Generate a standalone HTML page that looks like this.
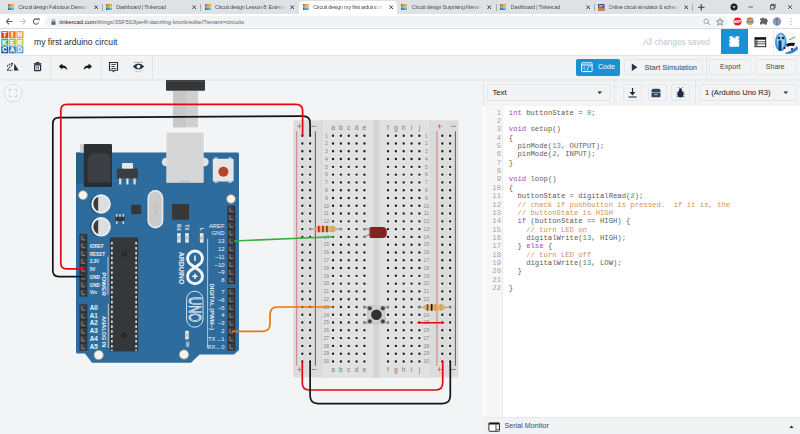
<!DOCTYPE html>
<html><head><meta charset="utf-8">
<style>
*{margin:0;padding:0;box-sizing:border-box}
html,body{width:800px;height:434px;overflow:hidden;background:#f3f4f6;font-family:"Liberation Sans",sans-serif;position:relative}
.a{position:absolute}
#tabs{left:0;top:0;width:800px;height:14px;background:#dee1e6}
.tab{position:absolute;top:0;height:14px;font-size:5.4px;letter-spacing:-0.22px;color:#4a4d51;line-height:14.5px;white-space:nowrap}
.tab .t{position:absolute;left:14.75px;top:0;width:71px;overflow:hidden;-webkit-mask-image:linear-gradient(90deg,#000 85%,transparent)}
.tab .x{position:absolute;top:0;font-size:8px;color:#3c4043}
.sep{position:absolute;top:3.5px;width:1px;height:7px;background:#a8abb0}
#chrome{left:0;top:14px;width:800px;height:15px;background:#fff;border-bottom:1px solid #dadce0}
#url{left:45px;top:2px;width:683px;height:11px;border-radius:6px;background:#f1f3f4;font-size:5.86px;line-height:11px;color:#202124}
#hdr{left:0;top:29px;width:800px;height:26px;background:#fff}
#tb{left:0;top:55px;width:800px;height:25px;background:#f2f3f5;border-bottom:1px solid #e6e8eb;box-shadow:0 1px 1.5px rgba(0,0,0,0.04);z-index:2;border-top:1px solid #e3e5e8}
#canvas{left:0;top:80px;width:483px;height:354px;background:#f3f4f6;overflow:hidden}
#panel{left:483px;top:80px;width:317px;height:354px;background:#f2f3f5;border-left:1px solid #e4e6e9}
.btn{position:absolute;border:1px solid #e6e7ea;border-radius:2px;background:#f2f3f5;font-size:7.5px;color:#1d2d3e}
#code{left:483px;top:105.5px;width:317px;height:311.5px;background:#fff}
#gut{left:484px;top:105.5px;width:19px;height:311.5px;background:#f7f7f7;border-right:1px solid #ececec}
.ln{position:absolute;left:483px;width:18px;text-align:right;font-family:"Liberation Mono",monospace;font-size:7.2px;color:#a3a3a3;height:8px;line-height:8px}
.cl{position:absolute;left:508.8px;font-family:"Liberation Mono",monospace;font-size:7.24px;color:#5c5c5c;white-space:pre;height:8px;line-height:8px}
.k{color:#a53fc4}.n{color:#3a9479}.c{color:#d0925a}
#serial{left:483px;top:417px;width:317px;height:17px;background:#f1f2f4;border-top:1px solid #e6e8eb;font-size:7.2px;color:#1d2d3e}
</style></head><body>
<div id="tabs" class="a"><div class="tab" style="left:3.5px;width:98px"><svg class="a" style="left:4.3px;top:3.8px" width="6.2" height="6.2"><rect x="0.00" y="0.00" width="1.77" height="1.77" fill="#e8422a"/><rect x="2.07" y="0.00" width="1.77" height="1.77" fill="#f07b3c"/><rect x="4.13" y="0.00" width="1.77" height="1.77" fill="#f59a3a"/><rect x="0.00" y="2.07" width="1.77" height="1.77" fill="#4cb34c"/><rect x="2.07" y="2.07" width="1.77" height="1.77" fill="#8cc63f"/><rect x="4.13" y="2.07" width="1.77" height="1.77" fill="#c3d12f"/><rect x="0.00" y="4.13" width="1.77" height="1.77" fill="#1f5fa6"/><rect x="2.07" y="4.13" width="1.77" height="1.77" fill="#2b7fc3"/><rect x="4.13" y="4.13" width="1.77" height="1.77" fill="#55a8dd"/></svg><span class="t">Circuit design Fabulous Densor |</span><svg class="a" style="left:90px;top:5.2px" width="4.5" height="4.5"><path d="M0.5 0.5L4 4M4 0.5L0.5 4" stroke="#3c4043" stroke-width="1"/></svg></div><div class="tab" style="left:101.5px;width:98px"><svg class="a" style="left:4.3px;top:3.8px" width="6.2" height="6.2"><rect x="0.00" y="0.00" width="1.77" height="1.77" fill="#e8422a"/><rect x="2.07" y="0.00" width="1.77" height="1.77" fill="#f07b3c"/><rect x="4.13" y="0.00" width="1.77" height="1.77" fill="#f59a3a"/><rect x="0.00" y="2.07" width="1.77" height="1.77" fill="#4cb34c"/><rect x="2.07" y="2.07" width="1.77" height="1.77" fill="#8cc63f"/><rect x="4.13" y="2.07" width="1.77" height="1.77" fill="#c3d12f"/><rect x="0.00" y="4.13" width="1.77" height="1.77" fill="#1f5fa6"/><rect x="2.07" y="4.13" width="1.77" height="1.77" fill="#2b7fc3"/><rect x="4.13" y="4.13" width="1.77" height="1.77" fill="#55a8dd"/></svg><span class="t">Dashboard | Tinkercad</span><svg class="a" style="left:90px;top:5.2px" width="4.5" height="4.5"><path d="M0.5 0.5L4 4M4 0.5L0.5 4" stroke="#3c4043" stroke-width="1"/></svg></div><div class="tab" style="left:200.3px;width:98px"><svg class="a" style="left:4.3px;top:3.8px" width="6.2" height="6.2"><rect x="0.00" y="0.00" width="1.77" height="1.77" fill="#e8422a"/><rect x="2.07" y="0.00" width="1.77" height="1.77" fill="#f07b3c"/><rect x="4.13" y="0.00" width="1.77" height="1.77" fill="#f59a3a"/><rect x="0.00" y="2.07" width="1.77" height="1.77" fill="#4cb34c"/><rect x="2.07" y="2.07" width="1.77" height="1.77" fill="#8cc63f"/><rect x="4.13" y="2.07" width="1.77" height="1.77" fill="#c3d12f"/><rect x="0.00" y="4.13" width="1.77" height="1.77" fill="#1f5fa6"/><rect x="2.07" y="4.13" width="1.77" height="1.77" fill="#2b7fc3"/><rect x="4.13" y="4.13" width="1.77" height="1.77" fill="#55a8dd"/></svg><span class="t">Circuit design Lesson 8: External</span><svg class="a" style="left:90px;top:5.2px" width="4.5" height="4.5"><path d="M0.5 0.5L4 4M4 0.5L0.5 4" stroke="#3c4043" stroke-width="1"/></svg></div><div class="a" style="left:298.5px;top:1.2px;width:98.7px;height:12.8px;background:#fff;border-radius:4px 4px 0 0"></div><div class="tab" style="left:298.5px;width:98px"><svg class="a" style="left:4.3px;top:3.8px" width="6.2" height="6.2"><rect x="0.00" y="0.00" width="1.77" height="1.77" fill="#e8422a"/><rect x="2.07" y="0.00" width="1.77" height="1.77" fill="#f07b3c"/><rect x="4.13" y="0.00" width="1.77" height="1.77" fill="#f59a3a"/><rect x="0.00" y="2.07" width="1.77" height="1.77" fill="#4cb34c"/><rect x="2.07" y="2.07" width="1.77" height="1.77" fill="#8cc63f"/><rect x="4.13" y="2.07" width="1.77" height="1.77" fill="#c3d12f"/><rect x="0.00" y="4.13" width="1.77" height="1.77" fill="#1f5fa6"/><rect x="2.07" y="4.13" width="1.77" height="1.77" fill="#2b7fc3"/><rect x="4.13" y="4.13" width="1.77" height="1.77" fill="#55a8dd"/></svg><span class="t">Circuit design my first arduino ci</span><svg class="a" style="left:90px;top:5.2px" width="4.5" height="4.5"><path d="M0.5 0.5L4 4M4 0.5L0.5 4" stroke="#3c4043" stroke-width="1"/></svg></div><div class="tab" style="left:397px;width:98px"><svg class="a" style="left:4.3px;top:3.8px" width="6.2" height="6.2"><rect x="0.00" y="0.00" width="1.77" height="1.77" fill="#e8422a"/><rect x="2.07" y="0.00" width="1.77" height="1.77" fill="#f07b3c"/><rect x="4.13" y="0.00" width="1.77" height="1.77" fill="#f59a3a"/><rect x="0.00" y="2.07" width="1.77" height="1.77" fill="#4cb34c"/><rect x="2.07" y="2.07" width="1.77" height="1.77" fill="#8cc63f"/><rect x="4.13" y="2.07" width="1.77" height="1.77" fill="#c3d12f"/><rect x="0.00" y="4.13" width="1.77" height="1.77" fill="#1f5fa6"/><rect x="2.07" y="4.13" width="1.77" height="1.77" fill="#2b7fc3"/><rect x="4.13" y="4.13" width="1.77" height="1.77" fill="#55a8dd"/></svg><span class="t">Circuit design Surprising Kieran-</span><svg class="a" style="left:90px;top:5.2px" width="4.5" height="4.5"><path d="M0.5 0.5L4 4M4 0.5L0.5 4" stroke="#3c4043" stroke-width="1"/></svg></div><div class="tab" style="left:495.75px;width:98px"><svg class="a" style="left:4.3px;top:3.8px" width="6.2" height="6.2"><rect x="0.00" y="0.00" width="1.77" height="1.77" fill="#e8422a"/><rect x="2.07" y="0.00" width="1.77" height="1.77" fill="#f07b3c"/><rect x="4.13" y="0.00" width="1.77" height="1.77" fill="#f59a3a"/><rect x="0.00" y="2.07" width="1.77" height="1.77" fill="#4cb34c"/><rect x="2.07" y="2.07" width="1.77" height="1.77" fill="#8cc63f"/><rect x="4.13" y="2.07" width="1.77" height="1.77" fill="#c3d12f"/><rect x="0.00" y="4.13" width="1.77" height="1.77" fill="#1f5fa6"/><rect x="2.07" y="4.13" width="1.77" height="1.77" fill="#2b7fc3"/><rect x="4.13" y="4.13" width="1.77" height="1.77" fill="#55a8dd"/></svg><span class="t">Dashboard | Tinkercad</span><svg class="a" style="left:90px;top:5.2px" width="4.5" height="4.5"><path d="M0.5 0.5L4 4M4 0.5L0.5 4" stroke="#3c4043" stroke-width="1"/></svg></div><div class="tab" style="left:593.75px;width:98px"><svg class="a" style="left:4.5px;top:3.8px" width="7" height="7"><rect width="6.5" height="6.5" fill="#2c4f86"/><rect y="3.6" width="6.5" height="2.9" fill="#e77a2a"/><path d="M1 1.5H5.5M1 2.7H4" stroke="#fff" stroke-width="0.6"/></svg><span class="t">Online circuit simulator & schem</span><svg class="a" style="left:90px;top:5.2px" width="4.5" height="4.5"><path d="M0.5 0.5L4 4M4 0.5L0.5 4" stroke="#3c4043" stroke-width="1"/></svg></div><div class="sep" style="left:101.5px"></div><div class="sep" style="left:200.3px"></div><div class="sep" style="left:495.75px"></div><div class="sep" style="left:593.75px"></div><div class="sep" style="left:691.5px"></div><svg class="a" style="left:697px;top:3px" width="9" height="9"><path d="M4.3 1V7.6M1 4.3H7.6" stroke="#3c4043" stroke-width="1.1"/></svg></div><div id="chrome" class="a"><svg class="a" style="left:4px;top:2px" width="40" height="11"><path d="M2.3 5.5H8.5M2.3 5.5L5.2 2.6M2.3 5.5L5.2 8.4" stroke="#5f6368" stroke-width="1.1" fill="none"/><path d="M21.5 5.5H15.5M21.5 5.5L18.6 2.6M21.5 5.5L18.6 8.4" stroke="#c4c7cb" stroke-width="1.1" fill="none"/><path d="M34.6 6.6A2.7 2.7 0 1 1 34 3.6" stroke="#5f6368" stroke-width="1.1" fill="none"/><path d="M33 2.2L35.6 2.2L35.6 4.8Z" fill="#5f6368"/></svg><div id="url" class="a"><svg class="a" style="left:6px;top:3px" width="5" height="6"><rect x="0.5" y="2.5" width="4" height="3.3" fill="#5f6368"/><path d="M1.3 2.6V1.8A1.2 1.2 0 0 1 3.7 1.8V2.6" stroke="#5f6368" stroke-width="0.8" fill="none"/></svg><span class="a" style="left:14.3px;top:0.5px;white-space:nowrap"><span style="color:#202124">tinkercad.com</span><span style="color:#5f6368">/things/3SF50Jlpe4f-dazzling-krunk/editel?tenant=circuits</span></span><svg class="a" style="left:658px;top:2px" width="8" height="8"><circle cx="3.2" cy="3.2" r="2.3" stroke="#8a8f95" stroke-width="0.8" fill="none"/><path d="M4.9 4.9L7 7" stroke="#8a8f95" stroke-width="0.9"/></svg><svg class="a" style="left:671px;top:1.5px" width="8" height="8"><path d="M4 0.6L5 3H7.4L5.5 4.6L6.2 7.2L4 5.7L1.8 7.2L2.5 4.6L0.6 3H3Z" stroke="#5f6368" stroke-width="0.7" fill="none"/></svg></div><svg class="a" style="left:730px;top:1px" width="70" height="13"><circle cx="7.5" cy="6.5" r="4" fill="#e0242a"/><text x="7.5" y="8" font-size="3.5" font-family="Liberation Sans" font-weight="bold" fill="#fff" text-anchor="middle">ABP</text><circle cx="20" cy="6.5" r="3.6" fill="#e99a3c"/><rect x="16.6" y="5.6" width="3" height="2.3" rx="0.8" fill="#4a9be0"/><rect x="20.4" y="5.6" width="3" height="2.3" rx="0.8" fill="#4a9be0"/><path d="M17 3.8Q20 1.8 23 3.8" stroke="#8a5a2a" stroke-width="0.9" fill="none"/><path d="M34 3.5h3v1.5a1 1 0 0 1 0 2v2.5h-3a1 1 0 0 0-2 0H30v-2.5a1 1 0 0 0 0-2V3.5h2a1 1 0 0 1 2 0z" fill="#5f6368"/><circle cx="47" cy="6.5" r="4.2" fill="#8e9bb8"/><path d="M47 2.5V10.5" stroke="#3c4a63" stroke-width="0.6"/><circle cx="61" cy="3.8" r="0.6" fill="#8a8f95"/><circle cx="61" cy="6.5" r="0.6" fill="#8a8f95"/><circle cx="61" cy="9.2" r="0.6" fill="#8a8f95"/></svg></div><svg class="a" style="left:720px;top:0" width="80" height="14"><circle cx="14" cy="7" r="3.5" fill="#202124"/><path d="M12.3 6.2 L15.7 6.2 L14 8.6Z" fill="#dee1e6"/><path d="M28.5 7H33" stroke="#3c4043" stroke-width="0.8"/><rect x="51.5" y="4.3" width="3.6" height="3.6" stroke="#3c4043" stroke-width="0.8" fill="none"/><rect x="50.4" y="5.5" width="3.6" height="3.6" stroke="#3c4043" stroke-width="0.8" fill="#dee1e6"/><path d="M68 5L72 9M72 5L68 9" stroke="#3c4043" stroke-width="0.8"/></svg><div id="hdr" class="a"><svg class="a" style="left:1px;top:1.8px" width="24" height="24"><rect x="0.20" y="0.20" width="7.00" height="7.00" fill="#ea3c23"/><text x="3.60" y="6.10" font-size="6.4" font-weight="bold" font-family="Liberation Sans" fill="#fff" stroke="#fff" stroke-width="0.25" text-anchor="middle">T</text><rect x="7.80" y="0.20" width="7.00" height="7.00" fill="#f17d3a"/><text x="11.20" y="6.10" font-size="6.4" font-weight="bold" font-family="Liberation Sans" fill="#fff" stroke="#fff" stroke-width="0.25" text-anchor="middle">I</text><rect x="15.40" y="0.20" width="7.00" height="7.00" fill="#f3923c"/><text x="18.80" y="6.10" font-size="6.4" font-weight="bold" font-family="Liberation Sans" fill="#fff" stroke="#fff" stroke-width="0.25" text-anchor="middle">N</text><rect x="0.20" y="7.80" width="7.00" height="7.00" fill="#47b04b"/><text x="3.60" y="13.70" font-size="6.4" font-weight="bold" font-family="Liberation Sans" fill="#fff" stroke="#fff" stroke-width="0.25" text-anchor="middle">K</text><rect x="7.80" y="7.80" width="7.00" height="7.00" fill="#8dc641"/><text x="11.20" y="13.70" font-size="6.4" font-weight="bold" font-family="Liberation Sans" fill="#fff" stroke="#fff" stroke-width="0.25" text-anchor="middle">E</text><rect x="15.40" y="7.80" width="7.00" height="7.00" fill="#bccf33"/><text x="18.80" y="13.70" font-size="6.4" font-weight="bold" font-family="Liberation Sans" fill="#fff" stroke="#fff" stroke-width="0.25" text-anchor="middle">R</text><rect x="0.20" y="15.40" width="7.00" height="7.00" fill="#1c5ca8"/><text x="3.60" y="21.30" font-size="6.4" font-weight="bold" font-family="Liberation Sans" fill="#fff" stroke="#fff" stroke-width="0.25" text-anchor="middle">C</text><rect x="7.80" y="15.40" width="7.00" height="7.00" fill="#2a7dc2"/><text x="11.20" y="21.30" font-size="6.4" font-weight="bold" font-family="Liberation Sans" fill="#fff" stroke="#fff" stroke-width="0.25" text-anchor="middle">A</text><rect x="15.40" y="15.40" width="7.00" height="7.00" fill="#4aa3dc"/><text x="18.80" y="21.30" font-size="6.4" font-weight="bold" font-family="Liberation Sans" fill="#fff" stroke="#fff" stroke-width="0.25" text-anchor="middle">D</text></svg><div class="a" style="left:34px;top:7.5px;font-size:8.58px;color:#1d2d3e">my first arduino circuit</div><div class="a" style="left:643px;top:8.8px;font-size:8.26px;color:#bcc6d0">All changes saved</div><div class="a" style="left:721px;top:0;width:26.5px;height:25px;background:#1a91d5"></div><svg class="a" style="left:721px;top:0" width="27" height="25"><rect x="8.4" y="7.2" width="9.8" height="10.6" rx="1" fill="#fff"/><path d="M8.4 9.8h1v0.9h-1zM8.4 12.9h1v0.9h-1zM17.2 9.8h1v0.9h-1zM17.2 12.9h1v0.9h-1z" fill="#1a91d5"/><path d="M11.5 7.2a1.8 1.8 0 0 0 3.6 0z" fill="#1a91d5"/></svg><svg class="a" style="left:752px;top:0" width="20" height="25"><rect x="3" y="8.7" width="10.7" height="9" fill="none" stroke="#111" stroke-width="0.9"/><rect x="3" y="8.7" width="10.7" height="2" fill="#111"/><path d="M3 12.8H13.7M3 14.9H13.7M4.8 10.7V17.7" stroke="#111" stroke-width="0.7"/></svg><div class="a" style="left:773px;top:0;width:1px;height:26px;background:#eceef0"></div><svg class="a" style="left:774px;top:0" width="26" height="26"><circle cx="13.3" cy="13.3" r="10.6" fill="#fbfaf8"/><ellipse cx="6.8" cy="13" rx="5.8" ry="9.2" fill="#3d93e0"/><ellipse cx="6.8" cy="12.5" rx="4" ry="7.5" fill="#8fd0f3"/><rect x="4.5" y="11.5" width="3" height="10" fill="#1b3c78"/><circle cx="5" cy="9" r="1.2" fill="#222"/><circle cx="9" cy="9" r="1.2" fill="#222"/><path d="M12 15Q17 13 21 14L20 17Q16 16 13 18Z" fill="#111"/><path d="M15 11L21 8" stroke="#333" stroke-width="0.6"/><path d="M11 24Q18 22 23 17L24 20Q20 25 12 25Z" fill="#2f7fe0"/><circle cx="10.5" cy="19" r="1" fill="#111"/><circle cx="18" cy="20" r="1" fill="#111"/></svg></div><div id="tb" class="a"><div class="a" style="left:0;top:-1px;width:800px;height:24px"><div class="a" style="left:50.2px;top:0;width:1px;height:24px;background:#e3e5e8"></div><div class="a" style="left:101px;top:0;width:1px;height:24px;background:#e3e5e8"></div><div class="a" style="left:151.6px;top:0;width:1px;height:24px;background:#e3e5e8"></div><svg class="a" style="left:0;top:0" width="160" height="24"><path d="M14.4 8.4L18.7 15.5H14Z" fill="#1d2d3e"/><path d="M7 15.3H12.8M7.6 14.5L12.8 9.3" stroke="#1d2d3e" stroke-width="1.1" stroke-dasharray="1.6 0.8"/><path d="M7.2 11.5Q9 8.5 12.6 8.6" stroke="#1d2d3e" stroke-width="1.1" fill="none" stroke-dasharray="1.6 0.8"/><path d="M11.5 7.5L13.2 8.6L11.8 10" fill="#1d2d3e"/><rect x="34.6" y="9.9" width="6" height="5.8" rx="0.6" stroke="#1d2d3e" stroke-width="1.2" fill="none"/><path d="M33.9 8.8H41.3" stroke="#1d2d3e" stroke-width="1.3"/><path d="M36.2 8V7.5H39V8" stroke="#1d2d3e" stroke-width="1"/><path d="M36.9 11.2V14.4M38.4 11.2V14.4" stroke="#1d2d3e" stroke-width="0.7"/><path d="M58.9 11.5L62.3 8.6V10.3Q66.8 10.5 67.3 15.1Q65.2 12.6 62.3 12.9V14.5Z" fill="#111"/><path d="M92 11.5L88.6 8.6V10.3Q84.1 10.5 83.6 15.1Q85.7 12.6 88.6 12.9V14.5Z" fill="#111"/><path d="M109.5 7.5H117.5V15.2H114.6L113.5 16.6L112.4 15.2H109.5Z" stroke="#1d2d3e" stroke-width="1.15" fill="none"/><path d="M111.4 9.5H115.7M111.4 11.5H114.8M111.4 13.5H115.7" stroke="#1d2d3e" stroke-width="0.85"/><path d="M132.9 11.6Q138.5 5.6 144.2 11.6Q138.5 17.6 132.9 11.6Z" fill="#1d2d3e"/><circle cx="138.5" cy="11.6" r="1.9" fill="#f2f3f5"/><path d="M134.2 7.3H142.8" stroke="#8d97a3" stroke-width="0.8"/><path d="M134.5 15.6L138.5 17L142.5 15.6" stroke="#8d97a3" stroke-width="0.7" fill="none" stroke-dasharray="1 0.6"/></svg><div class="a" style="left:576px;top:4px;width:44px;height:16.5px;background:#1a91d5;border-radius:2px"></div><svg class="a" style="left:581px;top:7px" width="12" height="11"><rect x="0.6" y="0.8" width="10.5" height="8.8" rx="0.8" stroke="#fff" stroke-width="1" fill="none"/><path d="M0.6 3H11" stroke="#fff" stroke-width="1"/><path d="M4.3 4.5L2.5 6.3L4.3 8M6.2 8.3L7.6 4.3M8.5 4.5L9.6 4.5" stroke="#fff" stroke-width="0.8" fill="none"/></svg><div class="a" style="left:597.9px;top:7.5px;font-size:7.11px;color:#fff">Code</div><div class="btn" style="left:623.5px;top:3.7px;width:79px;height:16.5px"></div><svg class="a" style="left:631px;top:8px" width="8" height="9"><path d="M0.8 0.6L6.4 4.3L0.8 8Z" fill="#243447"/></svg><div class="a" style="left:644.5px;top:7.5px;font-size:7.44px;color:#3a4655">Start Simulation</div><div class="a" style="left:705.5px;top:0;width:1px;height:24px;background:#e3e5e8"></div><div class="btn" style="left:709px;top:3.7px;width:42px;height:16.5px"></div><div class="a" style="left:720px;top:7.5px;font-size:7.09px;color:#3a4655">Export</div><div class="btn" style="left:754.5px;top:3.7px;width:41.5px;height:16.5px"></div><div class="a" style="left:765.8px;top:7.5px;font-size:7.03px;color:#3a4655">Share</div></div></div><div id="canvas" class="a"><svg class="a" style="left:0;top:0" width="483" height="354" viewBox="0 80 483 354" font-family="Liberation Sans"><circle cx="13.1" cy="93.1" r="8.9" fill="#f5f6f8" stroke="#d3d5d8" stroke-width="0.8"/><path d="M9.4 91.6V89.4H11.6M14.6 89.4H16.8V91.6M16.8 94.6V96.8H14.6M11.6 96.8H9.4V94.6" stroke="#c3c6ca" stroke-width="0.9" fill="none"/><rect x="293.3" y="120.2" width="165.09999999999997" height="257.2" rx="1.5" fill="#dcdcdc"/><rect x="321.4" y="120.2" width="109.1" height="257.2" fill="#e1e1e1"/><rect x="373.4" y="120.2" width="6" height="257.2" fill="#d4d4d4"/><rect x="321" y="120.2" width="0.6" height="257.2" fill="#d2d2d2"/><rect x="430.2" y="120.2" width="0.6" height="257.2" fill="#d2d2d2"/><path d="M296.7 131.2V365.8M436.9 131.2V365.8" stroke="#cd7070" stroke-width="0.9"/><path d="M315.4 131.2V365.8M455.4 131.2V365.8" stroke="#505050" stroke-width="0.9"/><path d="M297.3 126.3H301.7M299.5 124.1V128.5" stroke="#d06060" stroke-width="0.8"/><path d="M297.3 369.5H301.7M299.5 367.3V371.7" stroke="#d06060" stroke-width="0.8"/><path d="M437.3 126.3H441.7M439.5 124.1V128.5" stroke="#d06060" stroke-width="0.8"/><path d="M437.3 369.5H441.7M439.5 367.3V371.7" stroke="#d06060" stroke-width="0.8"/><path d="M311.6 126.3H316.4" stroke="#777" stroke-width="0.8"/><path d="M311.6 369.5H316.4" stroke="#777" stroke-width="0.8"/><path d="M451.1 126.3H455.9" stroke="#777" stroke-width="0.8"/><path d="M451.1 369.5H455.9" stroke="#777" stroke-width="0.8"/><path d="M332.70 136.20m-2 0a2 2 0 1 0 4 0a2 2 0 1 0 -4 0M340.55 136.20m-2 0a2 2 0 1 0 4 0a2 2 0 1 0 -4 0M348.40 136.20m-2 0a2 2 0 1 0 4 0a2 2 0 1 0 -4 0M356.25 136.20m-2 0a2 2 0 1 0 4 0a2 2 0 1 0 -4 0M364.10 136.20m-2 0a2 2 0 1 0 4 0a2 2 0 1 0 -4 0M387.70 136.20m-2 0a2 2 0 1 0 4 0a2 2 0 1 0 -4 0M395.55 136.20m-2 0a2 2 0 1 0 4 0a2 2 0 1 0 -4 0M403.40 136.20m-2 0a2 2 0 1 0 4 0a2 2 0 1 0 -4 0M411.25 136.20m-2 0a2 2 0 1 0 4 0a2 2 0 1 0 -4 0M419.10 136.20m-2 0a2 2 0 1 0 4 0a2 2 0 1 0 -4 0M302.00 136.20m-2 0a2 2 0 1 0 4 0a2 2 0 1 0 -4 0M309.80 136.20m-2 0a2 2 0 1 0 4 0a2 2 0 1 0 -4 0M442.00 136.20m-2 0a2 2 0 1 0 4 0a2 2 0 1 0 -4 0M449.80 136.20m-2 0a2 2 0 1 0 4 0a2 2 0 1 0 -4 0M332.70 143.98m-2 0a2 2 0 1 0 4 0a2 2 0 1 0 -4 0M340.55 143.98m-2 0a2 2 0 1 0 4 0a2 2 0 1 0 -4 0M348.40 143.98m-2 0a2 2 0 1 0 4 0a2 2 0 1 0 -4 0M356.25 143.98m-2 0a2 2 0 1 0 4 0a2 2 0 1 0 -4 0M364.10 143.98m-2 0a2 2 0 1 0 4 0a2 2 0 1 0 -4 0M387.70 143.98m-2 0a2 2 0 1 0 4 0a2 2 0 1 0 -4 0M395.55 143.98m-2 0a2 2 0 1 0 4 0a2 2 0 1 0 -4 0M403.40 143.98m-2 0a2 2 0 1 0 4 0a2 2 0 1 0 -4 0M411.25 143.98m-2 0a2 2 0 1 0 4 0a2 2 0 1 0 -4 0M419.10 143.98m-2 0a2 2 0 1 0 4 0a2 2 0 1 0 -4 0M302.00 143.98m-2 0a2 2 0 1 0 4 0a2 2 0 1 0 -4 0M309.80 143.98m-2 0a2 2 0 1 0 4 0a2 2 0 1 0 -4 0M442.00 143.98m-2 0a2 2 0 1 0 4 0a2 2 0 1 0 -4 0M449.80 143.98m-2 0a2 2 0 1 0 4 0a2 2 0 1 0 -4 0M332.70 151.77m-2 0a2 2 0 1 0 4 0a2 2 0 1 0 -4 0M340.55 151.77m-2 0a2 2 0 1 0 4 0a2 2 0 1 0 -4 0M348.40 151.77m-2 0a2 2 0 1 0 4 0a2 2 0 1 0 -4 0M356.25 151.77m-2 0a2 2 0 1 0 4 0a2 2 0 1 0 -4 0M364.10 151.77m-2 0a2 2 0 1 0 4 0a2 2 0 1 0 -4 0M387.70 151.77m-2 0a2 2 0 1 0 4 0a2 2 0 1 0 -4 0M395.55 151.77m-2 0a2 2 0 1 0 4 0a2 2 0 1 0 -4 0M403.40 151.77m-2 0a2 2 0 1 0 4 0a2 2 0 1 0 -4 0M411.25 151.77m-2 0a2 2 0 1 0 4 0a2 2 0 1 0 -4 0M419.10 151.77m-2 0a2 2 0 1 0 4 0a2 2 0 1 0 -4 0M302.00 151.77m-2 0a2 2 0 1 0 4 0a2 2 0 1 0 -4 0M309.80 151.77m-2 0a2 2 0 1 0 4 0a2 2 0 1 0 -4 0M442.00 151.77m-2 0a2 2 0 1 0 4 0a2 2 0 1 0 -4 0M449.80 151.77m-2 0a2 2 0 1 0 4 0a2 2 0 1 0 -4 0M332.70 159.55m-2 0a2 2 0 1 0 4 0a2 2 0 1 0 -4 0M340.55 159.55m-2 0a2 2 0 1 0 4 0a2 2 0 1 0 -4 0M348.40 159.55m-2 0a2 2 0 1 0 4 0a2 2 0 1 0 -4 0M356.25 159.55m-2 0a2 2 0 1 0 4 0a2 2 0 1 0 -4 0M364.10 159.55m-2 0a2 2 0 1 0 4 0a2 2 0 1 0 -4 0M387.70 159.55m-2 0a2 2 0 1 0 4 0a2 2 0 1 0 -4 0M395.55 159.55m-2 0a2 2 0 1 0 4 0a2 2 0 1 0 -4 0M403.40 159.55m-2 0a2 2 0 1 0 4 0a2 2 0 1 0 -4 0M411.25 159.55m-2 0a2 2 0 1 0 4 0a2 2 0 1 0 -4 0M419.10 159.55m-2 0a2 2 0 1 0 4 0a2 2 0 1 0 -4 0M302.00 159.55m-2 0a2 2 0 1 0 4 0a2 2 0 1 0 -4 0M309.80 159.55m-2 0a2 2 0 1 0 4 0a2 2 0 1 0 -4 0M442.00 159.55m-2 0a2 2 0 1 0 4 0a2 2 0 1 0 -4 0M449.80 159.55m-2 0a2 2 0 1 0 4 0a2 2 0 1 0 -4 0M332.70 167.34m-2 0a2 2 0 1 0 4 0a2 2 0 1 0 -4 0M340.55 167.34m-2 0a2 2 0 1 0 4 0a2 2 0 1 0 -4 0M348.40 167.34m-2 0a2 2 0 1 0 4 0a2 2 0 1 0 -4 0M356.25 167.34m-2 0a2 2 0 1 0 4 0a2 2 0 1 0 -4 0M364.10 167.34m-2 0a2 2 0 1 0 4 0a2 2 0 1 0 -4 0M387.70 167.34m-2 0a2 2 0 1 0 4 0a2 2 0 1 0 -4 0M395.55 167.34m-2 0a2 2 0 1 0 4 0a2 2 0 1 0 -4 0M403.40 167.34m-2 0a2 2 0 1 0 4 0a2 2 0 1 0 -4 0M411.25 167.34m-2 0a2 2 0 1 0 4 0a2 2 0 1 0 -4 0M419.10 167.34m-2 0a2 2 0 1 0 4 0a2 2 0 1 0 -4 0M302.00 167.34m-2 0a2 2 0 1 0 4 0a2 2 0 1 0 -4 0M309.80 167.34m-2 0a2 2 0 1 0 4 0a2 2 0 1 0 -4 0M442.00 167.34m-2 0a2 2 0 1 0 4 0a2 2 0 1 0 -4 0M449.80 167.34m-2 0a2 2 0 1 0 4 0a2 2 0 1 0 -4 0M332.70 175.12m-2 0a2 2 0 1 0 4 0a2 2 0 1 0 -4 0M340.55 175.12m-2 0a2 2 0 1 0 4 0a2 2 0 1 0 -4 0M348.40 175.12m-2 0a2 2 0 1 0 4 0a2 2 0 1 0 -4 0M356.25 175.12m-2 0a2 2 0 1 0 4 0a2 2 0 1 0 -4 0M364.10 175.12m-2 0a2 2 0 1 0 4 0a2 2 0 1 0 -4 0M387.70 175.12m-2 0a2 2 0 1 0 4 0a2 2 0 1 0 -4 0M395.55 175.12m-2 0a2 2 0 1 0 4 0a2 2 0 1 0 -4 0M403.40 175.12m-2 0a2 2 0 1 0 4 0a2 2 0 1 0 -4 0M411.25 175.12m-2 0a2 2 0 1 0 4 0a2 2 0 1 0 -4 0M419.10 175.12m-2 0a2 2 0 1 0 4 0a2 2 0 1 0 -4 0M302.00 175.12m-2 0a2 2 0 1 0 4 0a2 2 0 1 0 -4 0M309.80 175.12m-2 0a2 2 0 1 0 4 0a2 2 0 1 0 -4 0M442.00 175.12m-2 0a2 2 0 1 0 4 0a2 2 0 1 0 -4 0M449.80 175.12m-2 0a2 2 0 1 0 4 0a2 2 0 1 0 -4 0M332.70 182.91m-2 0a2 2 0 1 0 4 0a2 2 0 1 0 -4 0M340.55 182.91m-2 0a2 2 0 1 0 4 0a2 2 0 1 0 -4 0M348.40 182.91m-2 0a2 2 0 1 0 4 0a2 2 0 1 0 -4 0M356.25 182.91m-2 0a2 2 0 1 0 4 0a2 2 0 1 0 -4 0M364.10 182.91m-2 0a2 2 0 1 0 4 0a2 2 0 1 0 -4 0M387.70 182.91m-2 0a2 2 0 1 0 4 0a2 2 0 1 0 -4 0M395.55 182.91m-2 0a2 2 0 1 0 4 0a2 2 0 1 0 -4 0M403.40 182.91m-2 0a2 2 0 1 0 4 0a2 2 0 1 0 -4 0M411.25 182.91m-2 0a2 2 0 1 0 4 0a2 2 0 1 0 -4 0M419.10 182.91m-2 0a2 2 0 1 0 4 0a2 2 0 1 0 -4 0M302.00 182.91m-2 0a2 2 0 1 0 4 0a2 2 0 1 0 -4 0M309.80 182.91m-2 0a2 2 0 1 0 4 0a2 2 0 1 0 -4 0M442.00 182.91m-2 0a2 2 0 1 0 4 0a2 2 0 1 0 -4 0M449.80 182.91m-2 0a2 2 0 1 0 4 0a2 2 0 1 0 -4 0M332.70 190.69m-2 0a2 2 0 1 0 4 0a2 2 0 1 0 -4 0M340.55 190.69m-2 0a2 2 0 1 0 4 0a2 2 0 1 0 -4 0M348.40 190.69m-2 0a2 2 0 1 0 4 0a2 2 0 1 0 -4 0M356.25 190.69m-2 0a2 2 0 1 0 4 0a2 2 0 1 0 -4 0M364.10 190.69m-2 0a2 2 0 1 0 4 0a2 2 0 1 0 -4 0M387.70 190.69m-2 0a2 2 0 1 0 4 0a2 2 0 1 0 -4 0M395.55 190.69m-2 0a2 2 0 1 0 4 0a2 2 0 1 0 -4 0M403.40 190.69m-2 0a2 2 0 1 0 4 0a2 2 0 1 0 -4 0M411.25 190.69m-2 0a2 2 0 1 0 4 0a2 2 0 1 0 -4 0M419.10 190.69m-2 0a2 2 0 1 0 4 0a2 2 0 1 0 -4 0M302.00 190.69m-2 0a2 2 0 1 0 4 0a2 2 0 1 0 -4 0M309.80 190.69m-2 0a2 2 0 1 0 4 0a2 2 0 1 0 -4 0M442.00 190.69m-2 0a2 2 0 1 0 4 0a2 2 0 1 0 -4 0M449.80 190.69m-2 0a2 2 0 1 0 4 0a2 2 0 1 0 -4 0M332.70 198.48m-2 0a2 2 0 1 0 4 0a2 2 0 1 0 -4 0M340.55 198.48m-2 0a2 2 0 1 0 4 0a2 2 0 1 0 -4 0M348.40 198.48m-2 0a2 2 0 1 0 4 0a2 2 0 1 0 -4 0M356.25 198.48m-2 0a2 2 0 1 0 4 0a2 2 0 1 0 -4 0M364.10 198.48m-2 0a2 2 0 1 0 4 0a2 2 0 1 0 -4 0M387.70 198.48m-2 0a2 2 0 1 0 4 0a2 2 0 1 0 -4 0M395.55 198.48m-2 0a2 2 0 1 0 4 0a2 2 0 1 0 -4 0M403.40 198.48m-2 0a2 2 0 1 0 4 0a2 2 0 1 0 -4 0M411.25 198.48m-2 0a2 2 0 1 0 4 0a2 2 0 1 0 -4 0M419.10 198.48m-2 0a2 2 0 1 0 4 0a2 2 0 1 0 -4 0M302.00 198.48m-2 0a2 2 0 1 0 4 0a2 2 0 1 0 -4 0M309.80 198.48m-2 0a2 2 0 1 0 4 0a2 2 0 1 0 -4 0M442.00 198.48m-2 0a2 2 0 1 0 4 0a2 2 0 1 0 -4 0M449.80 198.48m-2 0a2 2 0 1 0 4 0a2 2 0 1 0 -4 0M332.70 206.26m-2 0a2 2 0 1 0 4 0a2 2 0 1 0 -4 0M340.55 206.26m-2 0a2 2 0 1 0 4 0a2 2 0 1 0 -4 0M348.40 206.26m-2 0a2 2 0 1 0 4 0a2 2 0 1 0 -4 0M356.25 206.26m-2 0a2 2 0 1 0 4 0a2 2 0 1 0 -4 0M364.10 206.26m-2 0a2 2 0 1 0 4 0a2 2 0 1 0 -4 0M387.70 206.26m-2 0a2 2 0 1 0 4 0a2 2 0 1 0 -4 0M395.55 206.26m-2 0a2 2 0 1 0 4 0a2 2 0 1 0 -4 0M403.40 206.26m-2 0a2 2 0 1 0 4 0a2 2 0 1 0 -4 0M411.25 206.26m-2 0a2 2 0 1 0 4 0a2 2 0 1 0 -4 0M419.10 206.26m-2 0a2 2 0 1 0 4 0a2 2 0 1 0 -4 0M302.00 206.26m-2 0a2 2 0 1 0 4 0a2 2 0 1 0 -4 0M309.80 206.26m-2 0a2 2 0 1 0 4 0a2 2 0 1 0 -4 0M442.00 206.26m-2 0a2 2 0 1 0 4 0a2 2 0 1 0 -4 0M449.80 206.26m-2 0a2 2 0 1 0 4 0a2 2 0 1 0 -4 0M332.70 214.05m-2 0a2 2 0 1 0 4 0a2 2 0 1 0 -4 0M340.55 214.05m-2 0a2 2 0 1 0 4 0a2 2 0 1 0 -4 0M348.40 214.05m-2 0a2 2 0 1 0 4 0a2 2 0 1 0 -4 0M356.25 214.05m-2 0a2 2 0 1 0 4 0a2 2 0 1 0 -4 0M364.10 214.05m-2 0a2 2 0 1 0 4 0a2 2 0 1 0 -4 0M387.70 214.05m-2 0a2 2 0 1 0 4 0a2 2 0 1 0 -4 0M395.55 214.05m-2 0a2 2 0 1 0 4 0a2 2 0 1 0 -4 0M403.40 214.05m-2 0a2 2 0 1 0 4 0a2 2 0 1 0 -4 0M411.25 214.05m-2 0a2 2 0 1 0 4 0a2 2 0 1 0 -4 0M419.10 214.05m-2 0a2 2 0 1 0 4 0a2 2 0 1 0 -4 0M302.00 214.05m-2 0a2 2 0 1 0 4 0a2 2 0 1 0 -4 0M309.80 214.05m-2 0a2 2 0 1 0 4 0a2 2 0 1 0 -4 0M442.00 214.05m-2 0a2 2 0 1 0 4 0a2 2 0 1 0 -4 0M449.80 214.05m-2 0a2 2 0 1 0 4 0a2 2 0 1 0 -4 0M332.70 221.83m-2 0a2 2 0 1 0 4 0a2 2 0 1 0 -4 0M340.55 221.83m-2 0a2 2 0 1 0 4 0a2 2 0 1 0 -4 0M348.40 221.83m-2 0a2 2 0 1 0 4 0a2 2 0 1 0 -4 0M356.25 221.83m-2 0a2 2 0 1 0 4 0a2 2 0 1 0 -4 0M364.10 221.83m-2 0a2 2 0 1 0 4 0a2 2 0 1 0 -4 0M387.70 221.83m-2 0a2 2 0 1 0 4 0a2 2 0 1 0 -4 0M395.55 221.83m-2 0a2 2 0 1 0 4 0a2 2 0 1 0 -4 0M403.40 221.83m-2 0a2 2 0 1 0 4 0a2 2 0 1 0 -4 0M411.25 221.83m-2 0a2 2 0 1 0 4 0a2 2 0 1 0 -4 0M419.10 221.83m-2 0a2 2 0 1 0 4 0a2 2 0 1 0 -4 0M302.00 221.83m-2 0a2 2 0 1 0 4 0a2 2 0 1 0 -4 0M309.80 221.83m-2 0a2 2 0 1 0 4 0a2 2 0 1 0 -4 0M442.00 221.83m-2 0a2 2 0 1 0 4 0a2 2 0 1 0 -4 0M449.80 221.83m-2 0a2 2 0 1 0 4 0a2 2 0 1 0 -4 0M332.70 229.62m-2 0a2 2 0 1 0 4 0a2 2 0 1 0 -4 0M340.55 229.62m-2 0a2 2 0 1 0 4 0a2 2 0 1 0 -4 0M348.40 229.62m-2 0a2 2 0 1 0 4 0a2 2 0 1 0 -4 0M356.25 229.62m-2 0a2 2 0 1 0 4 0a2 2 0 1 0 -4 0M364.10 229.62m-2 0a2 2 0 1 0 4 0a2 2 0 1 0 -4 0M387.70 229.62m-2 0a2 2 0 1 0 4 0a2 2 0 1 0 -4 0M395.55 229.62m-2 0a2 2 0 1 0 4 0a2 2 0 1 0 -4 0M403.40 229.62m-2 0a2 2 0 1 0 4 0a2 2 0 1 0 -4 0M411.25 229.62m-2 0a2 2 0 1 0 4 0a2 2 0 1 0 -4 0M419.10 229.62m-2 0a2 2 0 1 0 4 0a2 2 0 1 0 -4 0M302.00 229.62m-2 0a2 2 0 1 0 4 0a2 2 0 1 0 -4 0M309.80 229.62m-2 0a2 2 0 1 0 4 0a2 2 0 1 0 -4 0M442.00 229.62m-2 0a2 2 0 1 0 4 0a2 2 0 1 0 -4 0M449.80 229.62m-2 0a2 2 0 1 0 4 0a2 2 0 1 0 -4 0M332.70 237.40m-2 0a2 2 0 1 0 4 0a2 2 0 1 0 -4 0M340.55 237.40m-2 0a2 2 0 1 0 4 0a2 2 0 1 0 -4 0M348.40 237.40m-2 0a2 2 0 1 0 4 0a2 2 0 1 0 -4 0M356.25 237.40m-2 0a2 2 0 1 0 4 0a2 2 0 1 0 -4 0M364.10 237.40m-2 0a2 2 0 1 0 4 0a2 2 0 1 0 -4 0M387.70 237.40m-2 0a2 2 0 1 0 4 0a2 2 0 1 0 -4 0M395.55 237.40m-2 0a2 2 0 1 0 4 0a2 2 0 1 0 -4 0M403.40 237.40m-2 0a2 2 0 1 0 4 0a2 2 0 1 0 -4 0M411.25 237.40m-2 0a2 2 0 1 0 4 0a2 2 0 1 0 -4 0M419.10 237.40m-2 0a2 2 0 1 0 4 0a2 2 0 1 0 -4 0M302.00 237.40m-2 0a2 2 0 1 0 4 0a2 2 0 1 0 -4 0M309.80 237.40m-2 0a2 2 0 1 0 4 0a2 2 0 1 0 -4 0M442.00 237.40m-2 0a2 2 0 1 0 4 0a2 2 0 1 0 -4 0M449.80 237.40m-2 0a2 2 0 1 0 4 0a2 2 0 1 0 -4 0M332.70 245.19m-2 0a2 2 0 1 0 4 0a2 2 0 1 0 -4 0M340.55 245.19m-2 0a2 2 0 1 0 4 0a2 2 0 1 0 -4 0M348.40 245.19m-2 0a2 2 0 1 0 4 0a2 2 0 1 0 -4 0M356.25 245.19m-2 0a2 2 0 1 0 4 0a2 2 0 1 0 -4 0M364.10 245.19m-2 0a2 2 0 1 0 4 0a2 2 0 1 0 -4 0M387.70 245.19m-2 0a2 2 0 1 0 4 0a2 2 0 1 0 -4 0M395.55 245.19m-2 0a2 2 0 1 0 4 0a2 2 0 1 0 -4 0M403.40 245.19m-2 0a2 2 0 1 0 4 0a2 2 0 1 0 -4 0M411.25 245.19m-2 0a2 2 0 1 0 4 0a2 2 0 1 0 -4 0M419.10 245.19m-2 0a2 2 0 1 0 4 0a2 2 0 1 0 -4 0M302.00 245.19m-2 0a2 2 0 1 0 4 0a2 2 0 1 0 -4 0M309.80 245.19m-2 0a2 2 0 1 0 4 0a2 2 0 1 0 -4 0M442.00 245.19m-2 0a2 2 0 1 0 4 0a2 2 0 1 0 -4 0M449.80 245.19m-2 0a2 2 0 1 0 4 0a2 2 0 1 0 -4 0M332.70 252.97m-2 0a2 2 0 1 0 4 0a2 2 0 1 0 -4 0M340.55 252.97m-2 0a2 2 0 1 0 4 0a2 2 0 1 0 -4 0M348.40 252.97m-2 0a2 2 0 1 0 4 0a2 2 0 1 0 -4 0M356.25 252.97m-2 0a2 2 0 1 0 4 0a2 2 0 1 0 -4 0M364.10 252.97m-2 0a2 2 0 1 0 4 0a2 2 0 1 0 -4 0M387.70 252.97m-2 0a2 2 0 1 0 4 0a2 2 0 1 0 -4 0M395.55 252.97m-2 0a2 2 0 1 0 4 0a2 2 0 1 0 -4 0M403.40 252.97m-2 0a2 2 0 1 0 4 0a2 2 0 1 0 -4 0M411.25 252.97m-2 0a2 2 0 1 0 4 0a2 2 0 1 0 -4 0M419.10 252.97m-2 0a2 2 0 1 0 4 0a2 2 0 1 0 -4 0M302.00 252.97m-2 0a2 2 0 1 0 4 0a2 2 0 1 0 -4 0M309.80 252.97m-2 0a2 2 0 1 0 4 0a2 2 0 1 0 -4 0M442.00 252.97m-2 0a2 2 0 1 0 4 0a2 2 0 1 0 -4 0M449.80 252.97m-2 0a2 2 0 1 0 4 0a2 2 0 1 0 -4 0M332.70 260.76m-2 0a2 2 0 1 0 4 0a2 2 0 1 0 -4 0M340.55 260.76m-2 0a2 2 0 1 0 4 0a2 2 0 1 0 -4 0M348.40 260.76m-2 0a2 2 0 1 0 4 0a2 2 0 1 0 -4 0M356.25 260.76m-2 0a2 2 0 1 0 4 0a2 2 0 1 0 -4 0M364.10 260.76m-2 0a2 2 0 1 0 4 0a2 2 0 1 0 -4 0M387.70 260.76m-2 0a2 2 0 1 0 4 0a2 2 0 1 0 -4 0M395.55 260.76m-2 0a2 2 0 1 0 4 0a2 2 0 1 0 -4 0M403.40 260.76m-2 0a2 2 0 1 0 4 0a2 2 0 1 0 -4 0M411.25 260.76m-2 0a2 2 0 1 0 4 0a2 2 0 1 0 -4 0M419.10 260.76m-2 0a2 2 0 1 0 4 0a2 2 0 1 0 -4 0M302.00 260.76m-2 0a2 2 0 1 0 4 0a2 2 0 1 0 -4 0M309.80 260.76m-2 0a2 2 0 1 0 4 0a2 2 0 1 0 -4 0M442.00 260.76m-2 0a2 2 0 1 0 4 0a2 2 0 1 0 -4 0M449.80 260.76m-2 0a2 2 0 1 0 4 0a2 2 0 1 0 -4 0M332.70 268.54m-2 0a2 2 0 1 0 4 0a2 2 0 1 0 -4 0M340.55 268.54m-2 0a2 2 0 1 0 4 0a2 2 0 1 0 -4 0M348.40 268.54m-2 0a2 2 0 1 0 4 0a2 2 0 1 0 -4 0M356.25 268.54m-2 0a2 2 0 1 0 4 0a2 2 0 1 0 -4 0M364.10 268.54m-2 0a2 2 0 1 0 4 0a2 2 0 1 0 -4 0M387.70 268.54m-2 0a2 2 0 1 0 4 0a2 2 0 1 0 -4 0M395.55 268.54m-2 0a2 2 0 1 0 4 0a2 2 0 1 0 -4 0M403.40 268.54m-2 0a2 2 0 1 0 4 0a2 2 0 1 0 -4 0M411.25 268.54m-2 0a2 2 0 1 0 4 0a2 2 0 1 0 -4 0M419.10 268.54m-2 0a2 2 0 1 0 4 0a2 2 0 1 0 -4 0M302.00 268.54m-2 0a2 2 0 1 0 4 0a2 2 0 1 0 -4 0M309.80 268.54m-2 0a2 2 0 1 0 4 0a2 2 0 1 0 -4 0M442.00 268.54m-2 0a2 2 0 1 0 4 0a2 2 0 1 0 -4 0M449.80 268.54m-2 0a2 2 0 1 0 4 0a2 2 0 1 0 -4 0M332.70 276.33m-2 0a2 2 0 1 0 4 0a2 2 0 1 0 -4 0M340.55 276.33m-2 0a2 2 0 1 0 4 0a2 2 0 1 0 -4 0M348.40 276.33m-2 0a2 2 0 1 0 4 0a2 2 0 1 0 -4 0M356.25 276.33m-2 0a2 2 0 1 0 4 0a2 2 0 1 0 -4 0M364.10 276.33m-2 0a2 2 0 1 0 4 0a2 2 0 1 0 -4 0M387.70 276.33m-2 0a2 2 0 1 0 4 0a2 2 0 1 0 -4 0M395.55 276.33m-2 0a2 2 0 1 0 4 0a2 2 0 1 0 -4 0M403.40 276.33m-2 0a2 2 0 1 0 4 0a2 2 0 1 0 -4 0M411.25 276.33m-2 0a2 2 0 1 0 4 0a2 2 0 1 0 -4 0M419.10 276.33m-2 0a2 2 0 1 0 4 0a2 2 0 1 0 -4 0M302.00 276.33m-2 0a2 2 0 1 0 4 0a2 2 0 1 0 -4 0M309.80 276.33m-2 0a2 2 0 1 0 4 0a2 2 0 1 0 -4 0M442.00 276.33m-2 0a2 2 0 1 0 4 0a2 2 0 1 0 -4 0M449.80 276.33m-2 0a2 2 0 1 0 4 0a2 2 0 1 0 -4 0M332.70 284.12m-2 0a2 2 0 1 0 4 0a2 2 0 1 0 -4 0M340.55 284.12m-2 0a2 2 0 1 0 4 0a2 2 0 1 0 -4 0M348.40 284.12m-2 0a2 2 0 1 0 4 0a2 2 0 1 0 -4 0M356.25 284.12m-2 0a2 2 0 1 0 4 0a2 2 0 1 0 -4 0M364.10 284.12m-2 0a2 2 0 1 0 4 0a2 2 0 1 0 -4 0M387.70 284.12m-2 0a2 2 0 1 0 4 0a2 2 0 1 0 -4 0M395.55 284.12m-2 0a2 2 0 1 0 4 0a2 2 0 1 0 -4 0M403.40 284.12m-2 0a2 2 0 1 0 4 0a2 2 0 1 0 -4 0M411.25 284.12m-2 0a2 2 0 1 0 4 0a2 2 0 1 0 -4 0M419.10 284.12m-2 0a2 2 0 1 0 4 0a2 2 0 1 0 -4 0M302.00 284.12m-2 0a2 2 0 1 0 4 0a2 2 0 1 0 -4 0M309.80 284.12m-2 0a2 2 0 1 0 4 0a2 2 0 1 0 -4 0M442.00 284.12m-2 0a2 2 0 1 0 4 0a2 2 0 1 0 -4 0M449.80 284.12m-2 0a2 2 0 1 0 4 0a2 2 0 1 0 -4 0M332.70 291.90m-2 0a2 2 0 1 0 4 0a2 2 0 1 0 -4 0M340.55 291.90m-2 0a2 2 0 1 0 4 0a2 2 0 1 0 -4 0M348.40 291.90m-2 0a2 2 0 1 0 4 0a2 2 0 1 0 -4 0M356.25 291.90m-2 0a2 2 0 1 0 4 0a2 2 0 1 0 -4 0M364.10 291.90m-2 0a2 2 0 1 0 4 0a2 2 0 1 0 -4 0M387.70 291.90m-2 0a2 2 0 1 0 4 0a2 2 0 1 0 -4 0M395.55 291.90m-2 0a2 2 0 1 0 4 0a2 2 0 1 0 -4 0M403.40 291.90m-2 0a2 2 0 1 0 4 0a2 2 0 1 0 -4 0M411.25 291.90m-2 0a2 2 0 1 0 4 0a2 2 0 1 0 -4 0M419.10 291.90m-2 0a2 2 0 1 0 4 0a2 2 0 1 0 -4 0M302.00 291.90m-2 0a2 2 0 1 0 4 0a2 2 0 1 0 -4 0M309.80 291.90m-2 0a2 2 0 1 0 4 0a2 2 0 1 0 -4 0M442.00 291.90m-2 0a2 2 0 1 0 4 0a2 2 0 1 0 -4 0M449.80 291.90m-2 0a2 2 0 1 0 4 0a2 2 0 1 0 -4 0M332.70 299.69m-2 0a2 2 0 1 0 4 0a2 2 0 1 0 -4 0M340.55 299.69m-2 0a2 2 0 1 0 4 0a2 2 0 1 0 -4 0M348.40 299.69m-2 0a2 2 0 1 0 4 0a2 2 0 1 0 -4 0M356.25 299.69m-2 0a2 2 0 1 0 4 0a2 2 0 1 0 -4 0M364.10 299.69m-2 0a2 2 0 1 0 4 0a2 2 0 1 0 -4 0M387.70 299.69m-2 0a2 2 0 1 0 4 0a2 2 0 1 0 -4 0M395.55 299.69m-2 0a2 2 0 1 0 4 0a2 2 0 1 0 -4 0M403.40 299.69m-2 0a2 2 0 1 0 4 0a2 2 0 1 0 -4 0M411.25 299.69m-2 0a2 2 0 1 0 4 0a2 2 0 1 0 -4 0M419.10 299.69m-2 0a2 2 0 1 0 4 0a2 2 0 1 0 -4 0M302.00 299.69m-2 0a2 2 0 1 0 4 0a2 2 0 1 0 -4 0M309.80 299.69m-2 0a2 2 0 1 0 4 0a2 2 0 1 0 -4 0M442.00 299.69m-2 0a2 2 0 1 0 4 0a2 2 0 1 0 -4 0M449.80 299.69m-2 0a2 2 0 1 0 4 0a2 2 0 1 0 -4 0M332.70 307.47m-2 0a2 2 0 1 0 4 0a2 2 0 1 0 -4 0M340.55 307.47m-2 0a2 2 0 1 0 4 0a2 2 0 1 0 -4 0M348.40 307.47m-2 0a2 2 0 1 0 4 0a2 2 0 1 0 -4 0M356.25 307.47m-2 0a2 2 0 1 0 4 0a2 2 0 1 0 -4 0M364.10 307.47m-2 0a2 2 0 1 0 4 0a2 2 0 1 0 -4 0M387.70 307.47m-2 0a2 2 0 1 0 4 0a2 2 0 1 0 -4 0M395.55 307.47m-2 0a2 2 0 1 0 4 0a2 2 0 1 0 -4 0M403.40 307.47m-2 0a2 2 0 1 0 4 0a2 2 0 1 0 -4 0M411.25 307.47m-2 0a2 2 0 1 0 4 0a2 2 0 1 0 -4 0M419.10 307.47m-2 0a2 2 0 1 0 4 0a2 2 0 1 0 -4 0M302.00 307.47m-2 0a2 2 0 1 0 4 0a2 2 0 1 0 -4 0M309.80 307.47m-2 0a2 2 0 1 0 4 0a2 2 0 1 0 -4 0M442.00 307.47m-2 0a2 2 0 1 0 4 0a2 2 0 1 0 -4 0M449.80 307.47m-2 0a2 2 0 1 0 4 0a2 2 0 1 0 -4 0M332.70 315.25m-2 0a2 2 0 1 0 4 0a2 2 0 1 0 -4 0M340.55 315.25m-2 0a2 2 0 1 0 4 0a2 2 0 1 0 -4 0M348.40 315.25m-2 0a2 2 0 1 0 4 0a2 2 0 1 0 -4 0M356.25 315.25m-2 0a2 2 0 1 0 4 0a2 2 0 1 0 -4 0M364.10 315.25m-2 0a2 2 0 1 0 4 0a2 2 0 1 0 -4 0M387.70 315.25m-2 0a2 2 0 1 0 4 0a2 2 0 1 0 -4 0M395.55 315.25m-2 0a2 2 0 1 0 4 0a2 2 0 1 0 -4 0M403.40 315.25m-2 0a2 2 0 1 0 4 0a2 2 0 1 0 -4 0M411.25 315.25m-2 0a2 2 0 1 0 4 0a2 2 0 1 0 -4 0M419.10 315.25m-2 0a2 2 0 1 0 4 0a2 2 0 1 0 -4 0M302.00 315.25m-2 0a2 2 0 1 0 4 0a2 2 0 1 0 -4 0M309.80 315.25m-2 0a2 2 0 1 0 4 0a2 2 0 1 0 -4 0M442.00 315.25m-2 0a2 2 0 1 0 4 0a2 2 0 1 0 -4 0M449.80 315.25m-2 0a2 2 0 1 0 4 0a2 2 0 1 0 -4 0M332.70 323.04m-2 0a2 2 0 1 0 4 0a2 2 0 1 0 -4 0M340.55 323.04m-2 0a2 2 0 1 0 4 0a2 2 0 1 0 -4 0M348.40 323.04m-2 0a2 2 0 1 0 4 0a2 2 0 1 0 -4 0M356.25 323.04m-2 0a2 2 0 1 0 4 0a2 2 0 1 0 -4 0M364.10 323.04m-2 0a2 2 0 1 0 4 0a2 2 0 1 0 -4 0M387.70 323.04m-2 0a2 2 0 1 0 4 0a2 2 0 1 0 -4 0M395.55 323.04m-2 0a2 2 0 1 0 4 0a2 2 0 1 0 -4 0M403.40 323.04m-2 0a2 2 0 1 0 4 0a2 2 0 1 0 -4 0M411.25 323.04m-2 0a2 2 0 1 0 4 0a2 2 0 1 0 -4 0M419.10 323.04m-2 0a2 2 0 1 0 4 0a2 2 0 1 0 -4 0M302.00 323.04m-2 0a2 2 0 1 0 4 0a2 2 0 1 0 -4 0M309.80 323.04m-2 0a2 2 0 1 0 4 0a2 2 0 1 0 -4 0M442.00 323.04m-2 0a2 2 0 1 0 4 0a2 2 0 1 0 -4 0M449.80 323.04m-2 0a2 2 0 1 0 4 0a2 2 0 1 0 -4 0M332.70 330.82m-2 0a2 2 0 1 0 4 0a2 2 0 1 0 -4 0M340.55 330.82m-2 0a2 2 0 1 0 4 0a2 2 0 1 0 -4 0M348.40 330.82m-2 0a2 2 0 1 0 4 0a2 2 0 1 0 -4 0M356.25 330.82m-2 0a2 2 0 1 0 4 0a2 2 0 1 0 -4 0M364.10 330.82m-2 0a2 2 0 1 0 4 0a2 2 0 1 0 -4 0M387.70 330.82m-2 0a2 2 0 1 0 4 0a2 2 0 1 0 -4 0M395.55 330.82m-2 0a2 2 0 1 0 4 0a2 2 0 1 0 -4 0M403.40 330.82m-2 0a2 2 0 1 0 4 0a2 2 0 1 0 -4 0M411.25 330.82m-2 0a2 2 0 1 0 4 0a2 2 0 1 0 -4 0M419.10 330.82m-2 0a2 2 0 1 0 4 0a2 2 0 1 0 -4 0M302.00 330.82m-2 0a2 2 0 1 0 4 0a2 2 0 1 0 -4 0M309.80 330.82m-2 0a2 2 0 1 0 4 0a2 2 0 1 0 -4 0M442.00 330.82m-2 0a2 2 0 1 0 4 0a2 2 0 1 0 -4 0M449.80 330.82m-2 0a2 2 0 1 0 4 0a2 2 0 1 0 -4 0M332.70 338.61m-2 0a2 2 0 1 0 4 0a2 2 0 1 0 -4 0M340.55 338.61m-2 0a2 2 0 1 0 4 0a2 2 0 1 0 -4 0M348.40 338.61m-2 0a2 2 0 1 0 4 0a2 2 0 1 0 -4 0M356.25 338.61m-2 0a2 2 0 1 0 4 0a2 2 0 1 0 -4 0M364.10 338.61m-2 0a2 2 0 1 0 4 0a2 2 0 1 0 -4 0M387.70 338.61m-2 0a2 2 0 1 0 4 0a2 2 0 1 0 -4 0M395.55 338.61m-2 0a2 2 0 1 0 4 0a2 2 0 1 0 -4 0M403.40 338.61m-2 0a2 2 0 1 0 4 0a2 2 0 1 0 -4 0M411.25 338.61m-2 0a2 2 0 1 0 4 0a2 2 0 1 0 -4 0M419.10 338.61m-2 0a2 2 0 1 0 4 0a2 2 0 1 0 -4 0M302.00 338.61m-2 0a2 2 0 1 0 4 0a2 2 0 1 0 -4 0M309.80 338.61m-2 0a2 2 0 1 0 4 0a2 2 0 1 0 -4 0M442.00 338.61m-2 0a2 2 0 1 0 4 0a2 2 0 1 0 -4 0M449.80 338.61m-2 0a2 2 0 1 0 4 0a2 2 0 1 0 -4 0M332.70 346.39m-2 0a2 2 0 1 0 4 0a2 2 0 1 0 -4 0M340.55 346.39m-2 0a2 2 0 1 0 4 0a2 2 0 1 0 -4 0M348.40 346.39m-2 0a2 2 0 1 0 4 0a2 2 0 1 0 -4 0M356.25 346.39m-2 0a2 2 0 1 0 4 0a2 2 0 1 0 -4 0M364.10 346.39m-2 0a2 2 0 1 0 4 0a2 2 0 1 0 -4 0M387.70 346.39m-2 0a2 2 0 1 0 4 0a2 2 0 1 0 -4 0M395.55 346.39m-2 0a2 2 0 1 0 4 0a2 2 0 1 0 -4 0M403.40 346.39m-2 0a2 2 0 1 0 4 0a2 2 0 1 0 -4 0M411.25 346.39m-2 0a2 2 0 1 0 4 0a2 2 0 1 0 -4 0M419.10 346.39m-2 0a2 2 0 1 0 4 0a2 2 0 1 0 -4 0M302.00 346.39m-2 0a2 2 0 1 0 4 0a2 2 0 1 0 -4 0M309.80 346.39m-2 0a2 2 0 1 0 4 0a2 2 0 1 0 -4 0M442.00 346.39m-2 0a2 2 0 1 0 4 0a2 2 0 1 0 -4 0M449.80 346.39m-2 0a2 2 0 1 0 4 0a2 2 0 1 0 -4 0M332.70 354.18m-2 0a2 2 0 1 0 4 0a2 2 0 1 0 -4 0M340.55 354.18m-2 0a2 2 0 1 0 4 0a2 2 0 1 0 -4 0M348.40 354.18m-2 0a2 2 0 1 0 4 0a2 2 0 1 0 -4 0M356.25 354.18m-2 0a2 2 0 1 0 4 0a2 2 0 1 0 -4 0M364.10 354.18m-2 0a2 2 0 1 0 4 0a2 2 0 1 0 -4 0M387.70 354.18m-2 0a2 2 0 1 0 4 0a2 2 0 1 0 -4 0M395.55 354.18m-2 0a2 2 0 1 0 4 0a2 2 0 1 0 -4 0M403.40 354.18m-2 0a2 2 0 1 0 4 0a2 2 0 1 0 -4 0M411.25 354.18m-2 0a2 2 0 1 0 4 0a2 2 0 1 0 -4 0M419.10 354.18m-2 0a2 2 0 1 0 4 0a2 2 0 1 0 -4 0M302.00 354.18m-2 0a2 2 0 1 0 4 0a2 2 0 1 0 -4 0M309.80 354.18m-2 0a2 2 0 1 0 4 0a2 2 0 1 0 -4 0M442.00 354.18m-2 0a2 2 0 1 0 4 0a2 2 0 1 0 -4 0M449.80 354.18m-2 0a2 2 0 1 0 4 0a2 2 0 1 0 -4 0M332.70 361.97m-2 0a2 2 0 1 0 4 0a2 2 0 1 0 -4 0M340.55 361.97m-2 0a2 2 0 1 0 4 0a2 2 0 1 0 -4 0M348.40 361.97m-2 0a2 2 0 1 0 4 0a2 2 0 1 0 -4 0M356.25 361.97m-2 0a2 2 0 1 0 4 0a2 2 0 1 0 -4 0M364.10 361.97m-2 0a2 2 0 1 0 4 0a2 2 0 1 0 -4 0M387.70 361.97m-2 0a2 2 0 1 0 4 0a2 2 0 1 0 -4 0M395.55 361.97m-2 0a2 2 0 1 0 4 0a2 2 0 1 0 -4 0M403.40 361.97m-2 0a2 2 0 1 0 4 0a2 2 0 1 0 -4 0M411.25 361.97m-2 0a2 2 0 1 0 4 0a2 2 0 1 0 -4 0M419.10 361.97m-2 0a2 2 0 1 0 4 0a2 2 0 1 0 -4 0M302.00 361.97m-2 0a2 2 0 1 0 4 0a2 2 0 1 0 -4 0M309.80 361.97m-2 0a2 2 0 1 0 4 0a2 2 0 1 0 -4 0M442.00 361.97m-2 0a2 2 0 1 0 4 0a2 2 0 1 0 -4 0M449.80 361.97m-2 0a2 2 0 1 0 4 0a2 2 0 1 0 -4 0" fill="#f4f4f4" opacity="0.55"/><path d="M333.00 135.70m-1.2 0a1.2 1.2 0 1 0 2.4 0a1.2 1.2 0 1 0 -2.4 0M340.85 135.70m-1.2 0a1.2 1.2 0 1 0 2.4 0a1.2 1.2 0 1 0 -2.4 0M348.70 135.70m-1.2 0a1.2 1.2 0 1 0 2.4 0a1.2 1.2 0 1 0 -2.4 0M356.55 135.70m-1.2 0a1.2 1.2 0 1 0 2.4 0a1.2 1.2 0 1 0 -2.4 0M364.40 135.70m-1.2 0a1.2 1.2 0 1 0 2.4 0a1.2 1.2 0 1 0 -2.4 0M388.00 135.70m-1.2 0a1.2 1.2 0 1 0 2.4 0a1.2 1.2 0 1 0 -2.4 0M395.85 135.70m-1.2 0a1.2 1.2 0 1 0 2.4 0a1.2 1.2 0 1 0 -2.4 0M403.70 135.70m-1.2 0a1.2 1.2 0 1 0 2.4 0a1.2 1.2 0 1 0 -2.4 0M411.55 135.70m-1.2 0a1.2 1.2 0 1 0 2.4 0a1.2 1.2 0 1 0 -2.4 0M419.40 135.70m-1.2 0a1.2 1.2 0 1 0 2.4 0a1.2 1.2 0 1 0 -2.4 0M302.30 135.70m-1.2 0a1.2 1.2 0 1 0 2.4 0a1.2 1.2 0 1 0 -2.4 0M310.10 135.70m-1.2 0a1.2 1.2 0 1 0 2.4 0a1.2 1.2 0 1 0 -2.4 0M442.30 135.70m-1.2 0a1.2 1.2 0 1 0 2.4 0a1.2 1.2 0 1 0 -2.4 0M450.10 135.70m-1.2 0a1.2 1.2 0 1 0 2.4 0a1.2 1.2 0 1 0 -2.4 0M333.00 143.48m-1.2 0a1.2 1.2 0 1 0 2.4 0a1.2 1.2 0 1 0 -2.4 0M340.85 143.48m-1.2 0a1.2 1.2 0 1 0 2.4 0a1.2 1.2 0 1 0 -2.4 0M348.70 143.48m-1.2 0a1.2 1.2 0 1 0 2.4 0a1.2 1.2 0 1 0 -2.4 0M356.55 143.48m-1.2 0a1.2 1.2 0 1 0 2.4 0a1.2 1.2 0 1 0 -2.4 0M364.40 143.48m-1.2 0a1.2 1.2 0 1 0 2.4 0a1.2 1.2 0 1 0 -2.4 0M388.00 143.48m-1.2 0a1.2 1.2 0 1 0 2.4 0a1.2 1.2 0 1 0 -2.4 0M395.85 143.48m-1.2 0a1.2 1.2 0 1 0 2.4 0a1.2 1.2 0 1 0 -2.4 0M403.70 143.48m-1.2 0a1.2 1.2 0 1 0 2.4 0a1.2 1.2 0 1 0 -2.4 0M411.55 143.48m-1.2 0a1.2 1.2 0 1 0 2.4 0a1.2 1.2 0 1 0 -2.4 0M419.40 143.48m-1.2 0a1.2 1.2 0 1 0 2.4 0a1.2 1.2 0 1 0 -2.4 0M302.30 143.48m-1.2 0a1.2 1.2 0 1 0 2.4 0a1.2 1.2 0 1 0 -2.4 0M310.10 143.48m-1.2 0a1.2 1.2 0 1 0 2.4 0a1.2 1.2 0 1 0 -2.4 0M442.30 143.48m-1.2 0a1.2 1.2 0 1 0 2.4 0a1.2 1.2 0 1 0 -2.4 0M450.10 143.48m-1.2 0a1.2 1.2 0 1 0 2.4 0a1.2 1.2 0 1 0 -2.4 0M333.00 151.27m-1.2 0a1.2 1.2 0 1 0 2.4 0a1.2 1.2 0 1 0 -2.4 0M340.85 151.27m-1.2 0a1.2 1.2 0 1 0 2.4 0a1.2 1.2 0 1 0 -2.4 0M348.70 151.27m-1.2 0a1.2 1.2 0 1 0 2.4 0a1.2 1.2 0 1 0 -2.4 0M356.55 151.27m-1.2 0a1.2 1.2 0 1 0 2.4 0a1.2 1.2 0 1 0 -2.4 0M364.40 151.27m-1.2 0a1.2 1.2 0 1 0 2.4 0a1.2 1.2 0 1 0 -2.4 0M388.00 151.27m-1.2 0a1.2 1.2 0 1 0 2.4 0a1.2 1.2 0 1 0 -2.4 0M395.85 151.27m-1.2 0a1.2 1.2 0 1 0 2.4 0a1.2 1.2 0 1 0 -2.4 0M403.70 151.27m-1.2 0a1.2 1.2 0 1 0 2.4 0a1.2 1.2 0 1 0 -2.4 0M411.55 151.27m-1.2 0a1.2 1.2 0 1 0 2.4 0a1.2 1.2 0 1 0 -2.4 0M419.40 151.27m-1.2 0a1.2 1.2 0 1 0 2.4 0a1.2 1.2 0 1 0 -2.4 0M302.30 151.27m-1.2 0a1.2 1.2 0 1 0 2.4 0a1.2 1.2 0 1 0 -2.4 0M310.10 151.27m-1.2 0a1.2 1.2 0 1 0 2.4 0a1.2 1.2 0 1 0 -2.4 0M442.30 151.27m-1.2 0a1.2 1.2 0 1 0 2.4 0a1.2 1.2 0 1 0 -2.4 0M450.10 151.27m-1.2 0a1.2 1.2 0 1 0 2.4 0a1.2 1.2 0 1 0 -2.4 0M333.00 159.05m-1.2 0a1.2 1.2 0 1 0 2.4 0a1.2 1.2 0 1 0 -2.4 0M340.85 159.05m-1.2 0a1.2 1.2 0 1 0 2.4 0a1.2 1.2 0 1 0 -2.4 0M348.70 159.05m-1.2 0a1.2 1.2 0 1 0 2.4 0a1.2 1.2 0 1 0 -2.4 0M356.55 159.05m-1.2 0a1.2 1.2 0 1 0 2.4 0a1.2 1.2 0 1 0 -2.4 0M364.40 159.05m-1.2 0a1.2 1.2 0 1 0 2.4 0a1.2 1.2 0 1 0 -2.4 0M388.00 159.05m-1.2 0a1.2 1.2 0 1 0 2.4 0a1.2 1.2 0 1 0 -2.4 0M395.85 159.05m-1.2 0a1.2 1.2 0 1 0 2.4 0a1.2 1.2 0 1 0 -2.4 0M403.70 159.05m-1.2 0a1.2 1.2 0 1 0 2.4 0a1.2 1.2 0 1 0 -2.4 0M411.55 159.05m-1.2 0a1.2 1.2 0 1 0 2.4 0a1.2 1.2 0 1 0 -2.4 0M419.40 159.05m-1.2 0a1.2 1.2 0 1 0 2.4 0a1.2 1.2 0 1 0 -2.4 0M302.30 159.05m-1.2 0a1.2 1.2 0 1 0 2.4 0a1.2 1.2 0 1 0 -2.4 0M310.10 159.05m-1.2 0a1.2 1.2 0 1 0 2.4 0a1.2 1.2 0 1 0 -2.4 0M442.30 159.05m-1.2 0a1.2 1.2 0 1 0 2.4 0a1.2 1.2 0 1 0 -2.4 0M450.10 159.05m-1.2 0a1.2 1.2 0 1 0 2.4 0a1.2 1.2 0 1 0 -2.4 0M333.00 166.84m-1.2 0a1.2 1.2 0 1 0 2.4 0a1.2 1.2 0 1 0 -2.4 0M340.85 166.84m-1.2 0a1.2 1.2 0 1 0 2.4 0a1.2 1.2 0 1 0 -2.4 0M348.70 166.84m-1.2 0a1.2 1.2 0 1 0 2.4 0a1.2 1.2 0 1 0 -2.4 0M356.55 166.84m-1.2 0a1.2 1.2 0 1 0 2.4 0a1.2 1.2 0 1 0 -2.4 0M364.40 166.84m-1.2 0a1.2 1.2 0 1 0 2.4 0a1.2 1.2 0 1 0 -2.4 0M388.00 166.84m-1.2 0a1.2 1.2 0 1 0 2.4 0a1.2 1.2 0 1 0 -2.4 0M395.85 166.84m-1.2 0a1.2 1.2 0 1 0 2.4 0a1.2 1.2 0 1 0 -2.4 0M403.70 166.84m-1.2 0a1.2 1.2 0 1 0 2.4 0a1.2 1.2 0 1 0 -2.4 0M411.55 166.84m-1.2 0a1.2 1.2 0 1 0 2.4 0a1.2 1.2 0 1 0 -2.4 0M419.40 166.84m-1.2 0a1.2 1.2 0 1 0 2.4 0a1.2 1.2 0 1 0 -2.4 0M302.30 166.84m-1.2 0a1.2 1.2 0 1 0 2.4 0a1.2 1.2 0 1 0 -2.4 0M310.10 166.84m-1.2 0a1.2 1.2 0 1 0 2.4 0a1.2 1.2 0 1 0 -2.4 0M442.30 166.84m-1.2 0a1.2 1.2 0 1 0 2.4 0a1.2 1.2 0 1 0 -2.4 0M450.10 166.84m-1.2 0a1.2 1.2 0 1 0 2.4 0a1.2 1.2 0 1 0 -2.4 0M333.00 174.62m-1.2 0a1.2 1.2 0 1 0 2.4 0a1.2 1.2 0 1 0 -2.4 0M340.85 174.62m-1.2 0a1.2 1.2 0 1 0 2.4 0a1.2 1.2 0 1 0 -2.4 0M348.70 174.62m-1.2 0a1.2 1.2 0 1 0 2.4 0a1.2 1.2 0 1 0 -2.4 0M356.55 174.62m-1.2 0a1.2 1.2 0 1 0 2.4 0a1.2 1.2 0 1 0 -2.4 0M364.40 174.62m-1.2 0a1.2 1.2 0 1 0 2.4 0a1.2 1.2 0 1 0 -2.4 0M388.00 174.62m-1.2 0a1.2 1.2 0 1 0 2.4 0a1.2 1.2 0 1 0 -2.4 0M395.85 174.62m-1.2 0a1.2 1.2 0 1 0 2.4 0a1.2 1.2 0 1 0 -2.4 0M403.70 174.62m-1.2 0a1.2 1.2 0 1 0 2.4 0a1.2 1.2 0 1 0 -2.4 0M411.55 174.62m-1.2 0a1.2 1.2 0 1 0 2.4 0a1.2 1.2 0 1 0 -2.4 0M419.40 174.62m-1.2 0a1.2 1.2 0 1 0 2.4 0a1.2 1.2 0 1 0 -2.4 0M302.30 174.62m-1.2 0a1.2 1.2 0 1 0 2.4 0a1.2 1.2 0 1 0 -2.4 0M310.10 174.62m-1.2 0a1.2 1.2 0 1 0 2.4 0a1.2 1.2 0 1 0 -2.4 0M442.30 174.62m-1.2 0a1.2 1.2 0 1 0 2.4 0a1.2 1.2 0 1 0 -2.4 0M450.10 174.62m-1.2 0a1.2 1.2 0 1 0 2.4 0a1.2 1.2 0 1 0 -2.4 0M333.00 182.41m-1.2 0a1.2 1.2 0 1 0 2.4 0a1.2 1.2 0 1 0 -2.4 0M340.85 182.41m-1.2 0a1.2 1.2 0 1 0 2.4 0a1.2 1.2 0 1 0 -2.4 0M348.70 182.41m-1.2 0a1.2 1.2 0 1 0 2.4 0a1.2 1.2 0 1 0 -2.4 0M356.55 182.41m-1.2 0a1.2 1.2 0 1 0 2.4 0a1.2 1.2 0 1 0 -2.4 0M364.40 182.41m-1.2 0a1.2 1.2 0 1 0 2.4 0a1.2 1.2 0 1 0 -2.4 0M388.00 182.41m-1.2 0a1.2 1.2 0 1 0 2.4 0a1.2 1.2 0 1 0 -2.4 0M395.85 182.41m-1.2 0a1.2 1.2 0 1 0 2.4 0a1.2 1.2 0 1 0 -2.4 0M403.70 182.41m-1.2 0a1.2 1.2 0 1 0 2.4 0a1.2 1.2 0 1 0 -2.4 0M411.55 182.41m-1.2 0a1.2 1.2 0 1 0 2.4 0a1.2 1.2 0 1 0 -2.4 0M419.40 182.41m-1.2 0a1.2 1.2 0 1 0 2.4 0a1.2 1.2 0 1 0 -2.4 0M302.30 182.41m-1.2 0a1.2 1.2 0 1 0 2.4 0a1.2 1.2 0 1 0 -2.4 0M310.10 182.41m-1.2 0a1.2 1.2 0 1 0 2.4 0a1.2 1.2 0 1 0 -2.4 0M442.30 182.41m-1.2 0a1.2 1.2 0 1 0 2.4 0a1.2 1.2 0 1 0 -2.4 0M450.10 182.41m-1.2 0a1.2 1.2 0 1 0 2.4 0a1.2 1.2 0 1 0 -2.4 0M333.00 190.19m-1.2 0a1.2 1.2 0 1 0 2.4 0a1.2 1.2 0 1 0 -2.4 0M340.85 190.19m-1.2 0a1.2 1.2 0 1 0 2.4 0a1.2 1.2 0 1 0 -2.4 0M348.70 190.19m-1.2 0a1.2 1.2 0 1 0 2.4 0a1.2 1.2 0 1 0 -2.4 0M356.55 190.19m-1.2 0a1.2 1.2 0 1 0 2.4 0a1.2 1.2 0 1 0 -2.4 0M364.40 190.19m-1.2 0a1.2 1.2 0 1 0 2.4 0a1.2 1.2 0 1 0 -2.4 0M388.00 190.19m-1.2 0a1.2 1.2 0 1 0 2.4 0a1.2 1.2 0 1 0 -2.4 0M395.85 190.19m-1.2 0a1.2 1.2 0 1 0 2.4 0a1.2 1.2 0 1 0 -2.4 0M403.70 190.19m-1.2 0a1.2 1.2 0 1 0 2.4 0a1.2 1.2 0 1 0 -2.4 0M411.55 190.19m-1.2 0a1.2 1.2 0 1 0 2.4 0a1.2 1.2 0 1 0 -2.4 0M419.40 190.19m-1.2 0a1.2 1.2 0 1 0 2.4 0a1.2 1.2 0 1 0 -2.4 0M302.30 190.19m-1.2 0a1.2 1.2 0 1 0 2.4 0a1.2 1.2 0 1 0 -2.4 0M310.10 190.19m-1.2 0a1.2 1.2 0 1 0 2.4 0a1.2 1.2 0 1 0 -2.4 0M442.30 190.19m-1.2 0a1.2 1.2 0 1 0 2.4 0a1.2 1.2 0 1 0 -2.4 0M450.10 190.19m-1.2 0a1.2 1.2 0 1 0 2.4 0a1.2 1.2 0 1 0 -2.4 0M333.00 197.98m-1.2 0a1.2 1.2 0 1 0 2.4 0a1.2 1.2 0 1 0 -2.4 0M340.85 197.98m-1.2 0a1.2 1.2 0 1 0 2.4 0a1.2 1.2 0 1 0 -2.4 0M348.70 197.98m-1.2 0a1.2 1.2 0 1 0 2.4 0a1.2 1.2 0 1 0 -2.4 0M356.55 197.98m-1.2 0a1.2 1.2 0 1 0 2.4 0a1.2 1.2 0 1 0 -2.4 0M364.40 197.98m-1.2 0a1.2 1.2 0 1 0 2.4 0a1.2 1.2 0 1 0 -2.4 0M388.00 197.98m-1.2 0a1.2 1.2 0 1 0 2.4 0a1.2 1.2 0 1 0 -2.4 0M395.85 197.98m-1.2 0a1.2 1.2 0 1 0 2.4 0a1.2 1.2 0 1 0 -2.4 0M403.70 197.98m-1.2 0a1.2 1.2 0 1 0 2.4 0a1.2 1.2 0 1 0 -2.4 0M411.55 197.98m-1.2 0a1.2 1.2 0 1 0 2.4 0a1.2 1.2 0 1 0 -2.4 0M419.40 197.98m-1.2 0a1.2 1.2 0 1 0 2.4 0a1.2 1.2 0 1 0 -2.4 0M302.30 197.98m-1.2 0a1.2 1.2 0 1 0 2.4 0a1.2 1.2 0 1 0 -2.4 0M310.10 197.98m-1.2 0a1.2 1.2 0 1 0 2.4 0a1.2 1.2 0 1 0 -2.4 0M442.30 197.98m-1.2 0a1.2 1.2 0 1 0 2.4 0a1.2 1.2 0 1 0 -2.4 0M450.10 197.98m-1.2 0a1.2 1.2 0 1 0 2.4 0a1.2 1.2 0 1 0 -2.4 0M333.00 205.76m-1.2 0a1.2 1.2 0 1 0 2.4 0a1.2 1.2 0 1 0 -2.4 0M340.85 205.76m-1.2 0a1.2 1.2 0 1 0 2.4 0a1.2 1.2 0 1 0 -2.4 0M348.70 205.76m-1.2 0a1.2 1.2 0 1 0 2.4 0a1.2 1.2 0 1 0 -2.4 0M356.55 205.76m-1.2 0a1.2 1.2 0 1 0 2.4 0a1.2 1.2 0 1 0 -2.4 0M364.40 205.76m-1.2 0a1.2 1.2 0 1 0 2.4 0a1.2 1.2 0 1 0 -2.4 0M388.00 205.76m-1.2 0a1.2 1.2 0 1 0 2.4 0a1.2 1.2 0 1 0 -2.4 0M395.85 205.76m-1.2 0a1.2 1.2 0 1 0 2.4 0a1.2 1.2 0 1 0 -2.4 0M403.70 205.76m-1.2 0a1.2 1.2 0 1 0 2.4 0a1.2 1.2 0 1 0 -2.4 0M411.55 205.76m-1.2 0a1.2 1.2 0 1 0 2.4 0a1.2 1.2 0 1 0 -2.4 0M419.40 205.76m-1.2 0a1.2 1.2 0 1 0 2.4 0a1.2 1.2 0 1 0 -2.4 0M302.30 205.76m-1.2 0a1.2 1.2 0 1 0 2.4 0a1.2 1.2 0 1 0 -2.4 0M310.10 205.76m-1.2 0a1.2 1.2 0 1 0 2.4 0a1.2 1.2 0 1 0 -2.4 0M442.30 205.76m-1.2 0a1.2 1.2 0 1 0 2.4 0a1.2 1.2 0 1 0 -2.4 0M450.10 205.76m-1.2 0a1.2 1.2 0 1 0 2.4 0a1.2 1.2 0 1 0 -2.4 0M333.00 213.55m-1.2 0a1.2 1.2 0 1 0 2.4 0a1.2 1.2 0 1 0 -2.4 0M340.85 213.55m-1.2 0a1.2 1.2 0 1 0 2.4 0a1.2 1.2 0 1 0 -2.4 0M348.70 213.55m-1.2 0a1.2 1.2 0 1 0 2.4 0a1.2 1.2 0 1 0 -2.4 0M356.55 213.55m-1.2 0a1.2 1.2 0 1 0 2.4 0a1.2 1.2 0 1 0 -2.4 0M364.40 213.55m-1.2 0a1.2 1.2 0 1 0 2.4 0a1.2 1.2 0 1 0 -2.4 0M388.00 213.55m-1.2 0a1.2 1.2 0 1 0 2.4 0a1.2 1.2 0 1 0 -2.4 0M395.85 213.55m-1.2 0a1.2 1.2 0 1 0 2.4 0a1.2 1.2 0 1 0 -2.4 0M403.70 213.55m-1.2 0a1.2 1.2 0 1 0 2.4 0a1.2 1.2 0 1 0 -2.4 0M411.55 213.55m-1.2 0a1.2 1.2 0 1 0 2.4 0a1.2 1.2 0 1 0 -2.4 0M419.40 213.55m-1.2 0a1.2 1.2 0 1 0 2.4 0a1.2 1.2 0 1 0 -2.4 0M302.30 213.55m-1.2 0a1.2 1.2 0 1 0 2.4 0a1.2 1.2 0 1 0 -2.4 0M310.10 213.55m-1.2 0a1.2 1.2 0 1 0 2.4 0a1.2 1.2 0 1 0 -2.4 0M442.30 213.55m-1.2 0a1.2 1.2 0 1 0 2.4 0a1.2 1.2 0 1 0 -2.4 0M450.10 213.55m-1.2 0a1.2 1.2 0 1 0 2.4 0a1.2 1.2 0 1 0 -2.4 0M333.00 221.33m-1.2 0a1.2 1.2 0 1 0 2.4 0a1.2 1.2 0 1 0 -2.4 0M340.85 221.33m-1.2 0a1.2 1.2 0 1 0 2.4 0a1.2 1.2 0 1 0 -2.4 0M348.70 221.33m-1.2 0a1.2 1.2 0 1 0 2.4 0a1.2 1.2 0 1 0 -2.4 0M356.55 221.33m-1.2 0a1.2 1.2 0 1 0 2.4 0a1.2 1.2 0 1 0 -2.4 0M364.40 221.33m-1.2 0a1.2 1.2 0 1 0 2.4 0a1.2 1.2 0 1 0 -2.4 0M388.00 221.33m-1.2 0a1.2 1.2 0 1 0 2.4 0a1.2 1.2 0 1 0 -2.4 0M395.85 221.33m-1.2 0a1.2 1.2 0 1 0 2.4 0a1.2 1.2 0 1 0 -2.4 0M403.70 221.33m-1.2 0a1.2 1.2 0 1 0 2.4 0a1.2 1.2 0 1 0 -2.4 0M411.55 221.33m-1.2 0a1.2 1.2 0 1 0 2.4 0a1.2 1.2 0 1 0 -2.4 0M419.40 221.33m-1.2 0a1.2 1.2 0 1 0 2.4 0a1.2 1.2 0 1 0 -2.4 0M302.30 221.33m-1.2 0a1.2 1.2 0 1 0 2.4 0a1.2 1.2 0 1 0 -2.4 0M310.10 221.33m-1.2 0a1.2 1.2 0 1 0 2.4 0a1.2 1.2 0 1 0 -2.4 0M442.30 221.33m-1.2 0a1.2 1.2 0 1 0 2.4 0a1.2 1.2 0 1 0 -2.4 0M450.10 221.33m-1.2 0a1.2 1.2 0 1 0 2.4 0a1.2 1.2 0 1 0 -2.4 0M333.00 229.12m-1.2 0a1.2 1.2 0 1 0 2.4 0a1.2 1.2 0 1 0 -2.4 0M340.85 229.12m-1.2 0a1.2 1.2 0 1 0 2.4 0a1.2 1.2 0 1 0 -2.4 0M348.70 229.12m-1.2 0a1.2 1.2 0 1 0 2.4 0a1.2 1.2 0 1 0 -2.4 0M356.55 229.12m-1.2 0a1.2 1.2 0 1 0 2.4 0a1.2 1.2 0 1 0 -2.4 0M364.40 229.12m-1.2 0a1.2 1.2 0 1 0 2.4 0a1.2 1.2 0 1 0 -2.4 0M388.00 229.12m-1.2 0a1.2 1.2 0 1 0 2.4 0a1.2 1.2 0 1 0 -2.4 0M395.85 229.12m-1.2 0a1.2 1.2 0 1 0 2.4 0a1.2 1.2 0 1 0 -2.4 0M403.70 229.12m-1.2 0a1.2 1.2 0 1 0 2.4 0a1.2 1.2 0 1 0 -2.4 0M411.55 229.12m-1.2 0a1.2 1.2 0 1 0 2.4 0a1.2 1.2 0 1 0 -2.4 0M419.40 229.12m-1.2 0a1.2 1.2 0 1 0 2.4 0a1.2 1.2 0 1 0 -2.4 0M302.30 229.12m-1.2 0a1.2 1.2 0 1 0 2.4 0a1.2 1.2 0 1 0 -2.4 0M310.10 229.12m-1.2 0a1.2 1.2 0 1 0 2.4 0a1.2 1.2 0 1 0 -2.4 0M442.30 229.12m-1.2 0a1.2 1.2 0 1 0 2.4 0a1.2 1.2 0 1 0 -2.4 0M450.10 229.12m-1.2 0a1.2 1.2 0 1 0 2.4 0a1.2 1.2 0 1 0 -2.4 0M333.00 236.90m-1.2 0a1.2 1.2 0 1 0 2.4 0a1.2 1.2 0 1 0 -2.4 0M340.85 236.90m-1.2 0a1.2 1.2 0 1 0 2.4 0a1.2 1.2 0 1 0 -2.4 0M348.70 236.90m-1.2 0a1.2 1.2 0 1 0 2.4 0a1.2 1.2 0 1 0 -2.4 0M356.55 236.90m-1.2 0a1.2 1.2 0 1 0 2.4 0a1.2 1.2 0 1 0 -2.4 0M364.40 236.90m-1.2 0a1.2 1.2 0 1 0 2.4 0a1.2 1.2 0 1 0 -2.4 0M388.00 236.90m-1.2 0a1.2 1.2 0 1 0 2.4 0a1.2 1.2 0 1 0 -2.4 0M395.85 236.90m-1.2 0a1.2 1.2 0 1 0 2.4 0a1.2 1.2 0 1 0 -2.4 0M403.70 236.90m-1.2 0a1.2 1.2 0 1 0 2.4 0a1.2 1.2 0 1 0 -2.4 0M411.55 236.90m-1.2 0a1.2 1.2 0 1 0 2.4 0a1.2 1.2 0 1 0 -2.4 0M419.40 236.90m-1.2 0a1.2 1.2 0 1 0 2.4 0a1.2 1.2 0 1 0 -2.4 0M302.30 236.90m-1.2 0a1.2 1.2 0 1 0 2.4 0a1.2 1.2 0 1 0 -2.4 0M310.10 236.90m-1.2 0a1.2 1.2 0 1 0 2.4 0a1.2 1.2 0 1 0 -2.4 0M442.30 236.90m-1.2 0a1.2 1.2 0 1 0 2.4 0a1.2 1.2 0 1 0 -2.4 0M450.10 236.90m-1.2 0a1.2 1.2 0 1 0 2.4 0a1.2 1.2 0 1 0 -2.4 0M333.00 244.69m-1.2 0a1.2 1.2 0 1 0 2.4 0a1.2 1.2 0 1 0 -2.4 0M340.85 244.69m-1.2 0a1.2 1.2 0 1 0 2.4 0a1.2 1.2 0 1 0 -2.4 0M348.70 244.69m-1.2 0a1.2 1.2 0 1 0 2.4 0a1.2 1.2 0 1 0 -2.4 0M356.55 244.69m-1.2 0a1.2 1.2 0 1 0 2.4 0a1.2 1.2 0 1 0 -2.4 0M364.40 244.69m-1.2 0a1.2 1.2 0 1 0 2.4 0a1.2 1.2 0 1 0 -2.4 0M388.00 244.69m-1.2 0a1.2 1.2 0 1 0 2.4 0a1.2 1.2 0 1 0 -2.4 0M395.85 244.69m-1.2 0a1.2 1.2 0 1 0 2.4 0a1.2 1.2 0 1 0 -2.4 0M403.70 244.69m-1.2 0a1.2 1.2 0 1 0 2.4 0a1.2 1.2 0 1 0 -2.4 0M411.55 244.69m-1.2 0a1.2 1.2 0 1 0 2.4 0a1.2 1.2 0 1 0 -2.4 0M419.40 244.69m-1.2 0a1.2 1.2 0 1 0 2.4 0a1.2 1.2 0 1 0 -2.4 0M302.30 244.69m-1.2 0a1.2 1.2 0 1 0 2.4 0a1.2 1.2 0 1 0 -2.4 0M310.10 244.69m-1.2 0a1.2 1.2 0 1 0 2.4 0a1.2 1.2 0 1 0 -2.4 0M442.30 244.69m-1.2 0a1.2 1.2 0 1 0 2.4 0a1.2 1.2 0 1 0 -2.4 0M450.10 244.69m-1.2 0a1.2 1.2 0 1 0 2.4 0a1.2 1.2 0 1 0 -2.4 0M333.00 252.47m-1.2 0a1.2 1.2 0 1 0 2.4 0a1.2 1.2 0 1 0 -2.4 0M340.85 252.47m-1.2 0a1.2 1.2 0 1 0 2.4 0a1.2 1.2 0 1 0 -2.4 0M348.70 252.47m-1.2 0a1.2 1.2 0 1 0 2.4 0a1.2 1.2 0 1 0 -2.4 0M356.55 252.47m-1.2 0a1.2 1.2 0 1 0 2.4 0a1.2 1.2 0 1 0 -2.4 0M364.40 252.47m-1.2 0a1.2 1.2 0 1 0 2.4 0a1.2 1.2 0 1 0 -2.4 0M388.00 252.47m-1.2 0a1.2 1.2 0 1 0 2.4 0a1.2 1.2 0 1 0 -2.4 0M395.85 252.47m-1.2 0a1.2 1.2 0 1 0 2.4 0a1.2 1.2 0 1 0 -2.4 0M403.70 252.47m-1.2 0a1.2 1.2 0 1 0 2.4 0a1.2 1.2 0 1 0 -2.4 0M411.55 252.47m-1.2 0a1.2 1.2 0 1 0 2.4 0a1.2 1.2 0 1 0 -2.4 0M419.40 252.47m-1.2 0a1.2 1.2 0 1 0 2.4 0a1.2 1.2 0 1 0 -2.4 0M302.30 252.47m-1.2 0a1.2 1.2 0 1 0 2.4 0a1.2 1.2 0 1 0 -2.4 0M310.10 252.47m-1.2 0a1.2 1.2 0 1 0 2.4 0a1.2 1.2 0 1 0 -2.4 0M442.30 252.47m-1.2 0a1.2 1.2 0 1 0 2.4 0a1.2 1.2 0 1 0 -2.4 0M450.10 252.47m-1.2 0a1.2 1.2 0 1 0 2.4 0a1.2 1.2 0 1 0 -2.4 0M333.00 260.26m-1.2 0a1.2 1.2 0 1 0 2.4 0a1.2 1.2 0 1 0 -2.4 0M340.85 260.26m-1.2 0a1.2 1.2 0 1 0 2.4 0a1.2 1.2 0 1 0 -2.4 0M348.70 260.26m-1.2 0a1.2 1.2 0 1 0 2.4 0a1.2 1.2 0 1 0 -2.4 0M356.55 260.26m-1.2 0a1.2 1.2 0 1 0 2.4 0a1.2 1.2 0 1 0 -2.4 0M364.40 260.26m-1.2 0a1.2 1.2 0 1 0 2.4 0a1.2 1.2 0 1 0 -2.4 0M388.00 260.26m-1.2 0a1.2 1.2 0 1 0 2.4 0a1.2 1.2 0 1 0 -2.4 0M395.85 260.26m-1.2 0a1.2 1.2 0 1 0 2.4 0a1.2 1.2 0 1 0 -2.4 0M403.70 260.26m-1.2 0a1.2 1.2 0 1 0 2.4 0a1.2 1.2 0 1 0 -2.4 0M411.55 260.26m-1.2 0a1.2 1.2 0 1 0 2.4 0a1.2 1.2 0 1 0 -2.4 0M419.40 260.26m-1.2 0a1.2 1.2 0 1 0 2.4 0a1.2 1.2 0 1 0 -2.4 0M302.30 260.26m-1.2 0a1.2 1.2 0 1 0 2.4 0a1.2 1.2 0 1 0 -2.4 0M310.10 260.26m-1.2 0a1.2 1.2 0 1 0 2.4 0a1.2 1.2 0 1 0 -2.4 0M442.30 260.26m-1.2 0a1.2 1.2 0 1 0 2.4 0a1.2 1.2 0 1 0 -2.4 0M450.10 260.26m-1.2 0a1.2 1.2 0 1 0 2.4 0a1.2 1.2 0 1 0 -2.4 0M333.00 268.04m-1.2 0a1.2 1.2 0 1 0 2.4 0a1.2 1.2 0 1 0 -2.4 0M340.85 268.04m-1.2 0a1.2 1.2 0 1 0 2.4 0a1.2 1.2 0 1 0 -2.4 0M348.70 268.04m-1.2 0a1.2 1.2 0 1 0 2.4 0a1.2 1.2 0 1 0 -2.4 0M356.55 268.04m-1.2 0a1.2 1.2 0 1 0 2.4 0a1.2 1.2 0 1 0 -2.4 0M364.40 268.04m-1.2 0a1.2 1.2 0 1 0 2.4 0a1.2 1.2 0 1 0 -2.4 0M388.00 268.04m-1.2 0a1.2 1.2 0 1 0 2.4 0a1.2 1.2 0 1 0 -2.4 0M395.85 268.04m-1.2 0a1.2 1.2 0 1 0 2.4 0a1.2 1.2 0 1 0 -2.4 0M403.70 268.04m-1.2 0a1.2 1.2 0 1 0 2.4 0a1.2 1.2 0 1 0 -2.4 0M411.55 268.04m-1.2 0a1.2 1.2 0 1 0 2.4 0a1.2 1.2 0 1 0 -2.4 0M419.40 268.04m-1.2 0a1.2 1.2 0 1 0 2.4 0a1.2 1.2 0 1 0 -2.4 0M302.30 268.04m-1.2 0a1.2 1.2 0 1 0 2.4 0a1.2 1.2 0 1 0 -2.4 0M310.10 268.04m-1.2 0a1.2 1.2 0 1 0 2.4 0a1.2 1.2 0 1 0 -2.4 0M442.30 268.04m-1.2 0a1.2 1.2 0 1 0 2.4 0a1.2 1.2 0 1 0 -2.4 0M450.10 268.04m-1.2 0a1.2 1.2 0 1 0 2.4 0a1.2 1.2 0 1 0 -2.4 0M333.00 275.83m-1.2 0a1.2 1.2 0 1 0 2.4 0a1.2 1.2 0 1 0 -2.4 0M340.85 275.83m-1.2 0a1.2 1.2 0 1 0 2.4 0a1.2 1.2 0 1 0 -2.4 0M348.70 275.83m-1.2 0a1.2 1.2 0 1 0 2.4 0a1.2 1.2 0 1 0 -2.4 0M356.55 275.83m-1.2 0a1.2 1.2 0 1 0 2.4 0a1.2 1.2 0 1 0 -2.4 0M364.40 275.83m-1.2 0a1.2 1.2 0 1 0 2.4 0a1.2 1.2 0 1 0 -2.4 0M388.00 275.83m-1.2 0a1.2 1.2 0 1 0 2.4 0a1.2 1.2 0 1 0 -2.4 0M395.85 275.83m-1.2 0a1.2 1.2 0 1 0 2.4 0a1.2 1.2 0 1 0 -2.4 0M403.70 275.83m-1.2 0a1.2 1.2 0 1 0 2.4 0a1.2 1.2 0 1 0 -2.4 0M411.55 275.83m-1.2 0a1.2 1.2 0 1 0 2.4 0a1.2 1.2 0 1 0 -2.4 0M419.40 275.83m-1.2 0a1.2 1.2 0 1 0 2.4 0a1.2 1.2 0 1 0 -2.4 0M302.30 275.83m-1.2 0a1.2 1.2 0 1 0 2.4 0a1.2 1.2 0 1 0 -2.4 0M310.10 275.83m-1.2 0a1.2 1.2 0 1 0 2.4 0a1.2 1.2 0 1 0 -2.4 0M442.30 275.83m-1.2 0a1.2 1.2 0 1 0 2.4 0a1.2 1.2 0 1 0 -2.4 0M450.10 275.83m-1.2 0a1.2 1.2 0 1 0 2.4 0a1.2 1.2 0 1 0 -2.4 0M333.00 283.62m-1.2 0a1.2 1.2 0 1 0 2.4 0a1.2 1.2 0 1 0 -2.4 0M340.85 283.62m-1.2 0a1.2 1.2 0 1 0 2.4 0a1.2 1.2 0 1 0 -2.4 0M348.70 283.62m-1.2 0a1.2 1.2 0 1 0 2.4 0a1.2 1.2 0 1 0 -2.4 0M356.55 283.62m-1.2 0a1.2 1.2 0 1 0 2.4 0a1.2 1.2 0 1 0 -2.4 0M364.40 283.62m-1.2 0a1.2 1.2 0 1 0 2.4 0a1.2 1.2 0 1 0 -2.4 0M388.00 283.62m-1.2 0a1.2 1.2 0 1 0 2.4 0a1.2 1.2 0 1 0 -2.4 0M395.85 283.62m-1.2 0a1.2 1.2 0 1 0 2.4 0a1.2 1.2 0 1 0 -2.4 0M403.70 283.62m-1.2 0a1.2 1.2 0 1 0 2.4 0a1.2 1.2 0 1 0 -2.4 0M411.55 283.62m-1.2 0a1.2 1.2 0 1 0 2.4 0a1.2 1.2 0 1 0 -2.4 0M419.40 283.62m-1.2 0a1.2 1.2 0 1 0 2.4 0a1.2 1.2 0 1 0 -2.4 0M302.30 283.62m-1.2 0a1.2 1.2 0 1 0 2.4 0a1.2 1.2 0 1 0 -2.4 0M310.10 283.62m-1.2 0a1.2 1.2 0 1 0 2.4 0a1.2 1.2 0 1 0 -2.4 0M442.30 283.62m-1.2 0a1.2 1.2 0 1 0 2.4 0a1.2 1.2 0 1 0 -2.4 0M450.10 283.62m-1.2 0a1.2 1.2 0 1 0 2.4 0a1.2 1.2 0 1 0 -2.4 0M333.00 291.40m-1.2 0a1.2 1.2 0 1 0 2.4 0a1.2 1.2 0 1 0 -2.4 0M340.85 291.40m-1.2 0a1.2 1.2 0 1 0 2.4 0a1.2 1.2 0 1 0 -2.4 0M348.70 291.40m-1.2 0a1.2 1.2 0 1 0 2.4 0a1.2 1.2 0 1 0 -2.4 0M356.55 291.40m-1.2 0a1.2 1.2 0 1 0 2.4 0a1.2 1.2 0 1 0 -2.4 0M364.40 291.40m-1.2 0a1.2 1.2 0 1 0 2.4 0a1.2 1.2 0 1 0 -2.4 0M388.00 291.40m-1.2 0a1.2 1.2 0 1 0 2.4 0a1.2 1.2 0 1 0 -2.4 0M395.85 291.40m-1.2 0a1.2 1.2 0 1 0 2.4 0a1.2 1.2 0 1 0 -2.4 0M403.70 291.40m-1.2 0a1.2 1.2 0 1 0 2.4 0a1.2 1.2 0 1 0 -2.4 0M411.55 291.40m-1.2 0a1.2 1.2 0 1 0 2.4 0a1.2 1.2 0 1 0 -2.4 0M419.40 291.40m-1.2 0a1.2 1.2 0 1 0 2.4 0a1.2 1.2 0 1 0 -2.4 0M302.30 291.40m-1.2 0a1.2 1.2 0 1 0 2.4 0a1.2 1.2 0 1 0 -2.4 0M310.10 291.40m-1.2 0a1.2 1.2 0 1 0 2.4 0a1.2 1.2 0 1 0 -2.4 0M442.30 291.40m-1.2 0a1.2 1.2 0 1 0 2.4 0a1.2 1.2 0 1 0 -2.4 0M450.10 291.40m-1.2 0a1.2 1.2 0 1 0 2.4 0a1.2 1.2 0 1 0 -2.4 0M333.00 299.19m-1.2 0a1.2 1.2 0 1 0 2.4 0a1.2 1.2 0 1 0 -2.4 0M340.85 299.19m-1.2 0a1.2 1.2 0 1 0 2.4 0a1.2 1.2 0 1 0 -2.4 0M348.70 299.19m-1.2 0a1.2 1.2 0 1 0 2.4 0a1.2 1.2 0 1 0 -2.4 0M356.55 299.19m-1.2 0a1.2 1.2 0 1 0 2.4 0a1.2 1.2 0 1 0 -2.4 0M364.40 299.19m-1.2 0a1.2 1.2 0 1 0 2.4 0a1.2 1.2 0 1 0 -2.4 0M388.00 299.19m-1.2 0a1.2 1.2 0 1 0 2.4 0a1.2 1.2 0 1 0 -2.4 0M395.85 299.19m-1.2 0a1.2 1.2 0 1 0 2.4 0a1.2 1.2 0 1 0 -2.4 0M403.70 299.19m-1.2 0a1.2 1.2 0 1 0 2.4 0a1.2 1.2 0 1 0 -2.4 0M411.55 299.19m-1.2 0a1.2 1.2 0 1 0 2.4 0a1.2 1.2 0 1 0 -2.4 0M419.40 299.19m-1.2 0a1.2 1.2 0 1 0 2.4 0a1.2 1.2 0 1 0 -2.4 0M302.30 299.19m-1.2 0a1.2 1.2 0 1 0 2.4 0a1.2 1.2 0 1 0 -2.4 0M310.10 299.19m-1.2 0a1.2 1.2 0 1 0 2.4 0a1.2 1.2 0 1 0 -2.4 0M442.30 299.19m-1.2 0a1.2 1.2 0 1 0 2.4 0a1.2 1.2 0 1 0 -2.4 0M450.10 299.19m-1.2 0a1.2 1.2 0 1 0 2.4 0a1.2 1.2 0 1 0 -2.4 0M333.00 306.97m-1.2 0a1.2 1.2 0 1 0 2.4 0a1.2 1.2 0 1 0 -2.4 0M340.85 306.97m-1.2 0a1.2 1.2 0 1 0 2.4 0a1.2 1.2 0 1 0 -2.4 0M348.70 306.97m-1.2 0a1.2 1.2 0 1 0 2.4 0a1.2 1.2 0 1 0 -2.4 0M356.55 306.97m-1.2 0a1.2 1.2 0 1 0 2.4 0a1.2 1.2 0 1 0 -2.4 0M364.40 306.97m-1.2 0a1.2 1.2 0 1 0 2.4 0a1.2 1.2 0 1 0 -2.4 0M388.00 306.97m-1.2 0a1.2 1.2 0 1 0 2.4 0a1.2 1.2 0 1 0 -2.4 0M395.85 306.97m-1.2 0a1.2 1.2 0 1 0 2.4 0a1.2 1.2 0 1 0 -2.4 0M403.70 306.97m-1.2 0a1.2 1.2 0 1 0 2.4 0a1.2 1.2 0 1 0 -2.4 0M411.55 306.97m-1.2 0a1.2 1.2 0 1 0 2.4 0a1.2 1.2 0 1 0 -2.4 0M419.40 306.97m-1.2 0a1.2 1.2 0 1 0 2.4 0a1.2 1.2 0 1 0 -2.4 0M302.30 306.97m-1.2 0a1.2 1.2 0 1 0 2.4 0a1.2 1.2 0 1 0 -2.4 0M310.10 306.97m-1.2 0a1.2 1.2 0 1 0 2.4 0a1.2 1.2 0 1 0 -2.4 0M442.30 306.97m-1.2 0a1.2 1.2 0 1 0 2.4 0a1.2 1.2 0 1 0 -2.4 0M450.10 306.97m-1.2 0a1.2 1.2 0 1 0 2.4 0a1.2 1.2 0 1 0 -2.4 0M333.00 314.75m-1.2 0a1.2 1.2 0 1 0 2.4 0a1.2 1.2 0 1 0 -2.4 0M340.85 314.75m-1.2 0a1.2 1.2 0 1 0 2.4 0a1.2 1.2 0 1 0 -2.4 0M348.70 314.75m-1.2 0a1.2 1.2 0 1 0 2.4 0a1.2 1.2 0 1 0 -2.4 0M356.55 314.75m-1.2 0a1.2 1.2 0 1 0 2.4 0a1.2 1.2 0 1 0 -2.4 0M364.40 314.75m-1.2 0a1.2 1.2 0 1 0 2.4 0a1.2 1.2 0 1 0 -2.4 0M388.00 314.75m-1.2 0a1.2 1.2 0 1 0 2.4 0a1.2 1.2 0 1 0 -2.4 0M395.85 314.75m-1.2 0a1.2 1.2 0 1 0 2.4 0a1.2 1.2 0 1 0 -2.4 0M403.70 314.75m-1.2 0a1.2 1.2 0 1 0 2.4 0a1.2 1.2 0 1 0 -2.4 0M411.55 314.75m-1.2 0a1.2 1.2 0 1 0 2.4 0a1.2 1.2 0 1 0 -2.4 0M419.40 314.75m-1.2 0a1.2 1.2 0 1 0 2.4 0a1.2 1.2 0 1 0 -2.4 0M302.30 314.75m-1.2 0a1.2 1.2 0 1 0 2.4 0a1.2 1.2 0 1 0 -2.4 0M310.10 314.75m-1.2 0a1.2 1.2 0 1 0 2.4 0a1.2 1.2 0 1 0 -2.4 0M442.30 314.75m-1.2 0a1.2 1.2 0 1 0 2.4 0a1.2 1.2 0 1 0 -2.4 0M450.10 314.75m-1.2 0a1.2 1.2 0 1 0 2.4 0a1.2 1.2 0 1 0 -2.4 0M333.00 322.54m-1.2 0a1.2 1.2 0 1 0 2.4 0a1.2 1.2 0 1 0 -2.4 0M340.85 322.54m-1.2 0a1.2 1.2 0 1 0 2.4 0a1.2 1.2 0 1 0 -2.4 0M348.70 322.54m-1.2 0a1.2 1.2 0 1 0 2.4 0a1.2 1.2 0 1 0 -2.4 0M356.55 322.54m-1.2 0a1.2 1.2 0 1 0 2.4 0a1.2 1.2 0 1 0 -2.4 0M364.40 322.54m-1.2 0a1.2 1.2 0 1 0 2.4 0a1.2 1.2 0 1 0 -2.4 0M388.00 322.54m-1.2 0a1.2 1.2 0 1 0 2.4 0a1.2 1.2 0 1 0 -2.4 0M395.85 322.54m-1.2 0a1.2 1.2 0 1 0 2.4 0a1.2 1.2 0 1 0 -2.4 0M403.70 322.54m-1.2 0a1.2 1.2 0 1 0 2.4 0a1.2 1.2 0 1 0 -2.4 0M411.55 322.54m-1.2 0a1.2 1.2 0 1 0 2.4 0a1.2 1.2 0 1 0 -2.4 0M419.40 322.54m-1.2 0a1.2 1.2 0 1 0 2.4 0a1.2 1.2 0 1 0 -2.4 0M302.30 322.54m-1.2 0a1.2 1.2 0 1 0 2.4 0a1.2 1.2 0 1 0 -2.4 0M310.10 322.54m-1.2 0a1.2 1.2 0 1 0 2.4 0a1.2 1.2 0 1 0 -2.4 0M442.30 322.54m-1.2 0a1.2 1.2 0 1 0 2.4 0a1.2 1.2 0 1 0 -2.4 0M450.10 322.54m-1.2 0a1.2 1.2 0 1 0 2.4 0a1.2 1.2 0 1 0 -2.4 0M333.00 330.32m-1.2 0a1.2 1.2 0 1 0 2.4 0a1.2 1.2 0 1 0 -2.4 0M340.85 330.32m-1.2 0a1.2 1.2 0 1 0 2.4 0a1.2 1.2 0 1 0 -2.4 0M348.70 330.32m-1.2 0a1.2 1.2 0 1 0 2.4 0a1.2 1.2 0 1 0 -2.4 0M356.55 330.32m-1.2 0a1.2 1.2 0 1 0 2.4 0a1.2 1.2 0 1 0 -2.4 0M364.40 330.32m-1.2 0a1.2 1.2 0 1 0 2.4 0a1.2 1.2 0 1 0 -2.4 0M388.00 330.32m-1.2 0a1.2 1.2 0 1 0 2.4 0a1.2 1.2 0 1 0 -2.4 0M395.85 330.32m-1.2 0a1.2 1.2 0 1 0 2.4 0a1.2 1.2 0 1 0 -2.4 0M403.70 330.32m-1.2 0a1.2 1.2 0 1 0 2.4 0a1.2 1.2 0 1 0 -2.4 0M411.55 330.32m-1.2 0a1.2 1.2 0 1 0 2.4 0a1.2 1.2 0 1 0 -2.4 0M419.40 330.32m-1.2 0a1.2 1.2 0 1 0 2.4 0a1.2 1.2 0 1 0 -2.4 0M302.30 330.32m-1.2 0a1.2 1.2 0 1 0 2.4 0a1.2 1.2 0 1 0 -2.4 0M310.10 330.32m-1.2 0a1.2 1.2 0 1 0 2.4 0a1.2 1.2 0 1 0 -2.4 0M442.30 330.32m-1.2 0a1.2 1.2 0 1 0 2.4 0a1.2 1.2 0 1 0 -2.4 0M450.10 330.32m-1.2 0a1.2 1.2 0 1 0 2.4 0a1.2 1.2 0 1 0 -2.4 0M333.00 338.11m-1.2 0a1.2 1.2 0 1 0 2.4 0a1.2 1.2 0 1 0 -2.4 0M340.85 338.11m-1.2 0a1.2 1.2 0 1 0 2.4 0a1.2 1.2 0 1 0 -2.4 0M348.70 338.11m-1.2 0a1.2 1.2 0 1 0 2.4 0a1.2 1.2 0 1 0 -2.4 0M356.55 338.11m-1.2 0a1.2 1.2 0 1 0 2.4 0a1.2 1.2 0 1 0 -2.4 0M364.40 338.11m-1.2 0a1.2 1.2 0 1 0 2.4 0a1.2 1.2 0 1 0 -2.4 0M388.00 338.11m-1.2 0a1.2 1.2 0 1 0 2.4 0a1.2 1.2 0 1 0 -2.4 0M395.85 338.11m-1.2 0a1.2 1.2 0 1 0 2.4 0a1.2 1.2 0 1 0 -2.4 0M403.70 338.11m-1.2 0a1.2 1.2 0 1 0 2.4 0a1.2 1.2 0 1 0 -2.4 0M411.55 338.11m-1.2 0a1.2 1.2 0 1 0 2.4 0a1.2 1.2 0 1 0 -2.4 0M419.40 338.11m-1.2 0a1.2 1.2 0 1 0 2.4 0a1.2 1.2 0 1 0 -2.4 0M302.30 338.11m-1.2 0a1.2 1.2 0 1 0 2.4 0a1.2 1.2 0 1 0 -2.4 0M310.10 338.11m-1.2 0a1.2 1.2 0 1 0 2.4 0a1.2 1.2 0 1 0 -2.4 0M442.30 338.11m-1.2 0a1.2 1.2 0 1 0 2.4 0a1.2 1.2 0 1 0 -2.4 0M450.10 338.11m-1.2 0a1.2 1.2 0 1 0 2.4 0a1.2 1.2 0 1 0 -2.4 0M333.00 345.89m-1.2 0a1.2 1.2 0 1 0 2.4 0a1.2 1.2 0 1 0 -2.4 0M340.85 345.89m-1.2 0a1.2 1.2 0 1 0 2.4 0a1.2 1.2 0 1 0 -2.4 0M348.70 345.89m-1.2 0a1.2 1.2 0 1 0 2.4 0a1.2 1.2 0 1 0 -2.4 0M356.55 345.89m-1.2 0a1.2 1.2 0 1 0 2.4 0a1.2 1.2 0 1 0 -2.4 0M364.40 345.89m-1.2 0a1.2 1.2 0 1 0 2.4 0a1.2 1.2 0 1 0 -2.4 0M388.00 345.89m-1.2 0a1.2 1.2 0 1 0 2.4 0a1.2 1.2 0 1 0 -2.4 0M395.85 345.89m-1.2 0a1.2 1.2 0 1 0 2.4 0a1.2 1.2 0 1 0 -2.4 0M403.70 345.89m-1.2 0a1.2 1.2 0 1 0 2.4 0a1.2 1.2 0 1 0 -2.4 0M411.55 345.89m-1.2 0a1.2 1.2 0 1 0 2.4 0a1.2 1.2 0 1 0 -2.4 0M419.40 345.89m-1.2 0a1.2 1.2 0 1 0 2.4 0a1.2 1.2 0 1 0 -2.4 0M302.30 345.89m-1.2 0a1.2 1.2 0 1 0 2.4 0a1.2 1.2 0 1 0 -2.4 0M310.10 345.89m-1.2 0a1.2 1.2 0 1 0 2.4 0a1.2 1.2 0 1 0 -2.4 0M442.30 345.89m-1.2 0a1.2 1.2 0 1 0 2.4 0a1.2 1.2 0 1 0 -2.4 0M450.10 345.89m-1.2 0a1.2 1.2 0 1 0 2.4 0a1.2 1.2 0 1 0 -2.4 0M333.00 353.68m-1.2 0a1.2 1.2 0 1 0 2.4 0a1.2 1.2 0 1 0 -2.4 0M340.85 353.68m-1.2 0a1.2 1.2 0 1 0 2.4 0a1.2 1.2 0 1 0 -2.4 0M348.70 353.68m-1.2 0a1.2 1.2 0 1 0 2.4 0a1.2 1.2 0 1 0 -2.4 0M356.55 353.68m-1.2 0a1.2 1.2 0 1 0 2.4 0a1.2 1.2 0 1 0 -2.4 0M364.40 353.68m-1.2 0a1.2 1.2 0 1 0 2.4 0a1.2 1.2 0 1 0 -2.4 0M388.00 353.68m-1.2 0a1.2 1.2 0 1 0 2.4 0a1.2 1.2 0 1 0 -2.4 0M395.85 353.68m-1.2 0a1.2 1.2 0 1 0 2.4 0a1.2 1.2 0 1 0 -2.4 0M403.70 353.68m-1.2 0a1.2 1.2 0 1 0 2.4 0a1.2 1.2 0 1 0 -2.4 0M411.55 353.68m-1.2 0a1.2 1.2 0 1 0 2.4 0a1.2 1.2 0 1 0 -2.4 0M419.40 353.68m-1.2 0a1.2 1.2 0 1 0 2.4 0a1.2 1.2 0 1 0 -2.4 0M302.30 353.68m-1.2 0a1.2 1.2 0 1 0 2.4 0a1.2 1.2 0 1 0 -2.4 0M310.10 353.68m-1.2 0a1.2 1.2 0 1 0 2.4 0a1.2 1.2 0 1 0 -2.4 0M442.30 353.68m-1.2 0a1.2 1.2 0 1 0 2.4 0a1.2 1.2 0 1 0 -2.4 0M450.10 353.68m-1.2 0a1.2 1.2 0 1 0 2.4 0a1.2 1.2 0 1 0 -2.4 0M333.00 361.47m-1.2 0a1.2 1.2 0 1 0 2.4 0a1.2 1.2 0 1 0 -2.4 0M340.85 361.47m-1.2 0a1.2 1.2 0 1 0 2.4 0a1.2 1.2 0 1 0 -2.4 0M348.70 361.47m-1.2 0a1.2 1.2 0 1 0 2.4 0a1.2 1.2 0 1 0 -2.4 0M356.55 361.47m-1.2 0a1.2 1.2 0 1 0 2.4 0a1.2 1.2 0 1 0 -2.4 0M364.40 361.47m-1.2 0a1.2 1.2 0 1 0 2.4 0a1.2 1.2 0 1 0 -2.4 0M388.00 361.47m-1.2 0a1.2 1.2 0 1 0 2.4 0a1.2 1.2 0 1 0 -2.4 0M395.85 361.47m-1.2 0a1.2 1.2 0 1 0 2.4 0a1.2 1.2 0 1 0 -2.4 0M403.70 361.47m-1.2 0a1.2 1.2 0 1 0 2.4 0a1.2 1.2 0 1 0 -2.4 0M411.55 361.47m-1.2 0a1.2 1.2 0 1 0 2.4 0a1.2 1.2 0 1 0 -2.4 0M419.40 361.47m-1.2 0a1.2 1.2 0 1 0 2.4 0a1.2 1.2 0 1 0 -2.4 0M302.30 361.47m-1.2 0a1.2 1.2 0 1 0 2.4 0a1.2 1.2 0 1 0 -2.4 0M310.10 361.47m-1.2 0a1.2 1.2 0 1 0 2.4 0a1.2 1.2 0 1 0 -2.4 0M442.30 361.47m-1.2 0a1.2 1.2 0 1 0 2.4 0a1.2 1.2 0 1 0 -2.4 0M450.10 361.47m-1.2 0a1.2 1.2 0 1 0 2.4 0a1.2 1.2 0 1 0 -2.4 0" fill="#1b1b1b"/><text x="333.00" y="129.6" font-size="6.6" fill="#777" text-anchor="middle">a</text><text x="333.00" y="372.4" font-size="6.6" fill="#777" text-anchor="middle">a</text><text x="340.85" y="129.6" font-size="6.6" fill="#777" text-anchor="middle">b</text><text x="340.85" y="372.4" font-size="6.6" fill="#777" text-anchor="middle">b</text><text x="348.70" y="129.6" font-size="6.6" fill="#777" text-anchor="middle">c</text><text x="348.70" y="372.4" font-size="6.6" fill="#777" text-anchor="middle">c</text><text x="356.55" y="129.6" font-size="6.6" fill="#777" text-anchor="middle">d</text><text x="356.55" y="372.4" font-size="6.6" fill="#777" text-anchor="middle">d</text><text x="364.40" y="129.6" font-size="6.6" fill="#777" text-anchor="middle">e</text><text x="364.40" y="372.4" font-size="6.6" fill="#777" text-anchor="middle">e</text><text x="388.00" y="129.6" font-size="6.6" fill="#777" text-anchor="middle">f</text><text x="388.00" y="372.4" font-size="6.6" fill="#777" text-anchor="middle">f</text><text x="395.85" y="129.6" font-size="6.6" fill="#777" text-anchor="middle">g</text><text x="395.85" y="372.4" font-size="6.6" fill="#777" text-anchor="middle">g</text><text x="403.70" y="129.6" font-size="6.6" fill="#777" text-anchor="middle">h</text><text x="403.70" y="372.4" font-size="6.6" fill="#777" text-anchor="middle">h</text><text x="411.55" y="129.6" font-size="6.6" fill="#777" text-anchor="middle">i</text><text x="411.55" y="372.4" font-size="6.6" fill="#777" text-anchor="middle">i</text><text x="419.40" y="129.6" font-size="6.6" fill="#777" text-anchor="middle">j</text><text x="419.40" y="372.4" font-size="6.6" fill="#777" text-anchor="middle">j</text><text x="326.3" y="137.50" font-size="5" fill="#858585" text-anchor="middle">1</text><text x="426.4" y="137.50" font-size="5" fill="#858585" text-anchor="middle">1</text><text x="326.3" y="145.28" font-size="5" fill="#858585" text-anchor="middle">2</text><text x="426.4" y="145.28" font-size="5" fill="#858585" text-anchor="middle">2</text><text x="326.3" y="153.07" font-size="5" fill="#858585" text-anchor="middle">3</text><text x="426.4" y="153.07" font-size="5" fill="#858585" text-anchor="middle">3</text><text x="326.3" y="160.85" font-size="5" fill="#858585" text-anchor="middle">4</text><text x="426.4" y="160.85" font-size="5" fill="#858585" text-anchor="middle">4</text><text x="326.3" y="168.64" font-size="5" fill="#858585" text-anchor="middle">5</text><text x="426.4" y="168.64" font-size="5" fill="#858585" text-anchor="middle">5</text><text x="326.3" y="176.43" font-size="5" fill="#858585" text-anchor="middle">6</text><text x="426.4" y="176.43" font-size="5" fill="#858585" text-anchor="middle">6</text><text x="326.3" y="184.21" font-size="5" fill="#858585" text-anchor="middle">7</text><text x="426.4" y="184.21" font-size="5" fill="#858585" text-anchor="middle">7</text><text x="326.3" y="192.00" font-size="5" fill="#858585" text-anchor="middle">8</text><text x="426.4" y="192.00" font-size="5" fill="#858585" text-anchor="middle">8</text><text x="326.3" y="199.78" font-size="5" fill="#858585" text-anchor="middle">9</text><text x="426.4" y="199.78" font-size="5" fill="#858585" text-anchor="middle">9</text><text x="326.3" y="207.56" font-size="5" fill="#858585" text-anchor="middle">10</text><text x="426.4" y="207.56" font-size="5" fill="#858585" text-anchor="middle">10</text><text x="326.3" y="215.35" font-size="5" fill="#858585" text-anchor="middle">11</text><text x="426.4" y="215.35" font-size="5" fill="#858585" text-anchor="middle">11</text><text x="326.3" y="223.13" font-size="5" fill="#858585" text-anchor="middle">12</text><text x="426.4" y="223.13" font-size="5" fill="#858585" text-anchor="middle">12</text><text x="326.3" y="230.92" font-size="5" fill="#858585" text-anchor="middle">13</text><text x="426.4" y="230.92" font-size="5" fill="#858585" text-anchor="middle">13</text><text x="326.3" y="238.70" font-size="5" fill="#858585" text-anchor="middle">14</text><text x="426.4" y="238.70" font-size="5" fill="#858585" text-anchor="middle">14</text><text x="326.3" y="246.49" font-size="5" fill="#858585" text-anchor="middle">15</text><text x="426.4" y="246.49" font-size="5" fill="#858585" text-anchor="middle">15</text><text x="326.3" y="254.28" font-size="5" fill="#858585" text-anchor="middle">16</text><text x="426.4" y="254.28" font-size="5" fill="#858585" text-anchor="middle">16</text><text x="326.3" y="262.06" font-size="5" fill="#858585" text-anchor="middle">17</text><text x="426.4" y="262.06" font-size="5" fill="#858585" text-anchor="middle">17</text><text x="326.3" y="269.84" font-size="5" fill="#858585" text-anchor="middle">18</text><text x="426.4" y="269.84" font-size="5" fill="#858585" text-anchor="middle">18</text><text x="326.3" y="277.63" font-size="5" fill="#858585" text-anchor="middle">19</text><text x="426.4" y="277.63" font-size="5" fill="#858585" text-anchor="middle">19</text><text x="326.3" y="285.42" font-size="5" fill="#858585" text-anchor="middle">20</text><text x="426.4" y="285.42" font-size="5" fill="#858585" text-anchor="middle">20</text><text x="326.3" y="293.20" font-size="5" fill="#858585" text-anchor="middle">21</text><text x="426.4" y="293.20" font-size="5" fill="#858585" text-anchor="middle">21</text><text x="326.3" y="300.99" font-size="5" fill="#858585" text-anchor="middle">22</text><text x="426.4" y="300.99" font-size="5" fill="#858585" text-anchor="middle">22</text><text x="326.3" y="308.77" font-size="5" fill="#858585" text-anchor="middle">23</text><text x="426.4" y="308.77" font-size="5" fill="#858585" text-anchor="middle">23</text><text x="326.3" y="316.56" font-size="5" fill="#858585" text-anchor="middle">24</text><text x="426.4" y="316.56" font-size="5" fill="#858585" text-anchor="middle">24</text><text x="326.3" y="324.34" font-size="5" fill="#858585" text-anchor="middle">25</text><text x="426.4" y="324.34" font-size="5" fill="#858585" text-anchor="middle">25</text><text x="326.3" y="332.12" font-size="5" fill="#858585" text-anchor="middle">26</text><text x="426.4" y="332.12" font-size="5" fill="#858585" text-anchor="middle">26</text><text x="326.3" y="339.91" font-size="5" fill="#858585" text-anchor="middle">27</text><text x="426.4" y="339.91" font-size="5" fill="#858585" text-anchor="middle">27</text><text x="326.3" y="347.69" font-size="5" fill="#858585" text-anchor="middle">28</text><text x="426.4" y="347.69" font-size="5" fill="#858585" text-anchor="middle">28</text><text x="326.3" y="355.48" font-size="5" fill="#858585" text-anchor="middle">29</text><text x="426.4" y="355.48" font-size="5" fill="#858585" text-anchor="middle">29</text><text x="326.3" y="363.27" font-size="5" fill="#858585" text-anchor="middle">30</text><text x="426.4" y="363.27" font-size="5" fill="#858585" text-anchor="middle">30</text><path d="M77.5 152.6H237.5Q239 152.6 239 154V350L234 354.5H199.6L191 362.8H92L85 353.5H77.5Q76 353.5 76 352V154Q76 152.6 77.5 152.6Z" fill="#2f6c9e"/><rect x="76" y="152.6" width="8" height="31" fill="#28608c"/><rect x="80" y="144" width="4" height="8.6" fill="#d0d0d0"/><rect x="83.8" y="144" width="28.2" height="42.8" rx="1.2" fill="#2e3134"/><path d="M87.8 186V161Q87.8 153.2 95.6 153.2H104Q110.3 153.2 110.3 159.5V186Z" fill="#3c3f43"/><rect x="84" y="182.5" width="27.8" height="4.3" fill="#292b2e"/><rect x="122" y="163" width="11" height="6" rx="0.8" fill="#e6e6e6"/><rect x="116.8" y="168.7" width="21.2" height="9.7" fill="#3a3d40"/><path d="M120.2 178.4V184.6M127.4 178.4V184.6M134.6 178.4V184.6" stroke="#e0e0e0" stroke-width="2.2"/><ellipse cx="166" cy="162" rx="4.2" ry="4.3" fill="#e3e3e3"/><ellipse cx="204.5" cy="162" rx="4.2" ry="4.3" fill="#e3e3e3"/><rect x="166.3" y="132.5" width="37.4" height="50.3" fill="#dadada"/><rect x="167.5" y="133" width="35" height="49" fill="#d6d6d6"/><path d="M180 181.5H190" stroke="#aaa" stroke-width="0.6"/><rect x="212.8" y="158.8" width="20.8" height="22.7" rx="1" fill="#e6e6e6"/><circle cx="223.4" cy="171.8" r="5" fill="#b8432a"/><path d="M214.5 158.8v-1.2h3v1.2ZM228.5 158.8v-1.2h3v1.2ZM214.5 181.5v1.2h3v-1.2ZM228.5 181.5v1.2h3v-1.2Z" fill="#e6e6e6"/><circle cx="83" cy="195.2" r="4.4" fill="#f4f4f4" stroke="#b9a56a" stroke-width="0.8"/><circle cx="231" cy="199" r="4.3" fill="#f4f4f4" stroke="#b9a56a" stroke-width="0.8"/><circle cx="98.7" cy="355" r="4.6" fill="#f4f4f4" stroke="#b9a56a" stroke-width="0.8"/><circle cx="184" cy="354.5" r="4.6" fill="#f4f4f4" stroke="#b9a56a" stroke-width="0.8"/><circle cx="98.8" cy="204.6" r="9.6" fill="#285c87"/><circle cx="101.1" cy="204" r="9.7" fill="#f3f3f3"/><circle cx="101.1" cy="204" r="8.3" fill="#dedede"/><path d="M98.20 196.87A7.7 7.7 0 0 0 98.20 211.13Z" fill="#393c40"/><circle cx="98.8" cy="227.4" r="9.6" fill="#285c87"/><circle cx="101.1" cy="226.8" r="9.7" fill="#f3f3f3"/><circle cx="101.1" cy="226.8" r="8.3" fill="#dedede"/><path d="M98.20 219.67A7.7 7.7 0 0 0 98.20 233.93Z" fill="#393c40"/><rect x="148.2" y="190.8" width="14.4" height="36.9" rx="7.2" fill="#cbcbcb" stroke="#ececec" stroke-width="1.5"/><text transform="translate(154,209.3) rotate(90)" font-size="3.6" fill="#b5b5b5" text-anchor="middle">16.000</text><rect x="131.2" y="204.7" width="10.1" height="9.5" fill="#35383b"/><rect x="172" y="204" width="17" height="15.7" fill="#35383b"/><rect x="115.3" y="216.7" width="9.5" height="4.4" fill="#35383b"/><path d="M116.8 214v2.7M120 214v2.7M123.3 214v2.7M116.8 221.1v3M123.3 221.1v3" stroke="#e8e8e8" stroke-width="1.2"/><rect x="177.1" y="233.1" width="3.6" height="9.6" fill="#e8e8e8"/><rect x="177.1" y="236.29999999999998" width="3.6" height="3.2" fill="#c4c4c4"/><rect x="185.2" y="233.1" width="3.6" height="9.6" fill="#e8e8e8"/><rect x="185.2" y="236.29999999999998" width="3.6" height="3.2" fill="#c4c4c4"/><rect x="199.89999999999998" y="233.1" width="3.6" height="9.6" fill="#e8e8e8"/><rect x="199.89999999999998" y="236.29999999999998" width="3.6" height="3.2" fill="#c4c4c4"/><rect x="185.2" y="330.8" width="3.5" height="8.6" fill="#e8e8e8"/><rect x="185.2" y="333.6" width="3.5" height="2.9" fill="#c4c4c4"/><text transform="translate(177.3,227.5) rotate(90)" font-size="4.6" font-weight="bold" fill="#e9eef3" text-anchor="middle">RX</text><text transform="translate(185.4,227.5) rotate(90)" font-size="4.6" font-weight="bold" fill="#e9eef3" text-anchor="middle">TX</text><text transform="translate(200.1,229.5) rotate(90)" font-size="4.6" font-weight="bold" fill="#e9eef3" text-anchor="middle">L</text><text transform="translate(185.5,344) rotate(90)" font-size="3.8" font-weight="bold" fill="#e9eef3" text-anchor="middle">ON</text><rect x="109.9" y="237.3" width="28.2" height="114.2" rx="0.8" fill="#35383b"/><path d="M111.9 242V351M136.1 242V351" stroke="#f0f0f0" stroke-width="1.5" stroke-dasharray="2.6 2.3"/><circle cx="124.4" cy="253.9" r="2.8" fill="#27292c"/><circle cx="124.4" cy="335.3" r="2.8" fill="#27292c"/><rect x="227.5" y="205.8" width="7.8" height="78.20" fill="#2b2d30"/><rect x="228.2" y="206.40" width="6.4" height="6.62" fill="#3a3c3f"/><path d="M229.9 207.31V211.61H233.1" stroke="#8d9093" stroke-width="0.9" fill="none"/><rect x="228.2" y="214.22" width="6.4" height="6.62" fill="#3a3c3f"/><path d="M229.9 215.13V219.43H233.1" stroke="#8d9093" stroke-width="0.9" fill="none"/><rect x="228.2" y="222.04" width="6.4" height="6.62" fill="#3a3c3f"/><path d="M229.9 222.95000000000002V227.25000000000003H233.1" stroke="#8d9093" stroke-width="0.9" fill="none"/><rect x="228.2" y="229.86" width="6.4" height="6.62" fill="#3a3c3f"/><path d="M229.9 230.77V235.07000000000002H233.1" stroke="#8d9093" stroke-width="0.9" fill="none"/><rect x="228.2" y="237.68" width="6.4" height="6.62" fill="#3a3c3f"/><path d="M229.9 238.59V242.89000000000001H233.1" stroke="#8d9093" stroke-width="0.9" fill="none"/><rect x="228.2" y="245.50" width="6.4" height="6.62" fill="#3a3c3f"/><path d="M229.9 246.41V250.71H233.1" stroke="#8d9093" stroke-width="0.9" fill="none"/><rect x="228.2" y="253.32" width="6.4" height="6.62" fill="#3a3c3f"/><path d="M229.9 254.23V258.53H233.1" stroke="#8d9093" stroke-width="0.9" fill="none"/><rect x="228.2" y="261.14" width="6.4" height="6.62" fill="#3a3c3f"/><path d="M229.9 262.05000000000007V266.35H233.1" stroke="#8d9093" stroke-width="0.9" fill="none"/><rect x="228.2" y="268.96" width="6.4" height="6.62" fill="#3a3c3f"/><path d="M229.9 269.87V274.16999999999996H233.1" stroke="#8d9093" stroke-width="0.9" fill="none"/><rect x="228.2" y="276.78" width="6.4" height="6.62" fill="#3a3c3f"/><path d="M229.9 277.69000000000005V281.99H233.1" stroke="#8d9093" stroke-width="0.9" fill="none"/><rect x="227.5" y="288" width="7.8" height="62.56" fill="#2b2d30"/><rect x="228.2" y="288.60" width="6.4" height="6.62" fill="#3a3c3f"/><path d="M229.9 289.51000000000005V293.81H233.1" stroke="#8d9093" stroke-width="0.9" fill="none"/><rect x="228.2" y="296.42" width="6.4" height="6.62" fill="#3a3c3f"/><path d="M229.9 297.33000000000004V301.63H233.1" stroke="#8d9093" stroke-width="0.9" fill="none"/><rect x="228.2" y="304.24" width="6.4" height="6.62" fill="#3a3c3f"/><path d="M229.9 305.15000000000003V309.45H233.1" stroke="#8d9093" stroke-width="0.9" fill="none"/><rect x="228.2" y="312.06" width="6.4" height="6.62" fill="#3a3c3f"/><path d="M229.9 312.97V317.27H233.1" stroke="#8d9093" stroke-width="0.9" fill="none"/><rect x="228.2" y="319.88" width="6.4" height="6.62" fill="#3a3c3f"/><path d="M229.9 320.79V325.09H233.1" stroke="#8d9093" stroke-width="0.9" fill="none"/><rect x="228.2" y="327.70" width="6.4" height="6.62" fill="#3a3c3f"/><path d="M229.9 328.61V332.90999999999997H233.1" stroke="#8d9093" stroke-width="0.9" fill="none"/><rect x="228.2" y="335.52" width="6.4" height="6.62" fill="#3a3c3f"/><path d="M229.9 336.43V340.72999999999996H233.1" stroke="#8d9093" stroke-width="0.9" fill="none"/><rect x="228.2" y="343.34" width="6.4" height="6.62" fill="#3a3c3f"/><path d="M229.9 344.25V348.54999999999995H233.1" stroke="#8d9093" stroke-width="0.9" fill="none"/><rect x="79.5" y="234" width="7.8" height="62.56" fill="#2b2d30"/><rect x="80.2" y="234.60" width="6.4" height="6.62" fill="#3a3c3f"/><path d="M81.9 235.51V239.81H85.1" stroke="#8d9093" stroke-width="0.9" fill="none"/><rect x="80.2" y="242.42" width="6.4" height="6.62" fill="#3a3c3f"/><path d="M81.9 243.32999999999998V247.63H85.1" stroke="#8d9093" stroke-width="0.9" fill="none"/><rect x="80.2" y="250.24" width="6.4" height="6.62" fill="#3a3c3f"/><path d="M81.9 251.15V255.45000000000002H85.1" stroke="#8d9093" stroke-width="0.9" fill="none"/><rect x="80.2" y="258.06" width="6.4" height="6.62" fill="#3a3c3f"/><path d="M81.9 258.97V263.27H85.1" stroke="#8d9093" stroke-width="0.9" fill="none"/><rect x="80.2" y="265.88" width="6.4" height="6.62" fill="#3a3c3f"/><path d="M81.9 266.79V271.09H85.1" stroke="#8d9093" stroke-width="0.9" fill="none"/><rect x="80.2" y="273.70" width="6.4" height="6.62" fill="#3a3c3f"/><path d="M81.9 274.61V278.90999999999997H85.1" stroke="#8d9093" stroke-width="0.9" fill="none"/><rect x="80.2" y="281.52" width="6.4" height="6.62" fill="#3a3c3f"/><path d="M81.9 282.43V286.72999999999996H85.1" stroke="#8d9093" stroke-width="0.9" fill="none"/><rect x="80.2" y="289.34" width="6.4" height="6.62" fill="#3a3c3f"/><path d="M81.9 290.25V294.54999999999995H85.1" stroke="#8d9093" stroke-width="0.9" fill="none"/><rect x="79.5" y="304.4" width="7.8" height="46.20" fill="#2b2d30"/><rect x="80.2" y="305.00" width="6.4" height="6.50" fill="#3a3c3f"/><path d="M81.9 305.85V310.15H85.1" stroke="#8d9093" stroke-width="0.9" fill="none"/><rect x="80.2" y="312.70" width="6.4" height="6.50" fill="#3a3c3f"/><path d="M81.9 313.55V317.84999999999997H85.1" stroke="#8d9093" stroke-width="0.9" fill="none"/><rect x="80.2" y="320.40" width="6.4" height="6.50" fill="#3a3c3f"/><path d="M81.9 321.25V325.54999999999995H85.1" stroke="#8d9093" stroke-width="0.9" fill="none"/><rect x="80.2" y="328.10" width="6.4" height="6.50" fill="#3a3c3f"/><path d="M81.9 328.95V333.24999999999994H85.1" stroke="#8d9093" stroke-width="0.9" fill="none"/><rect x="80.2" y="335.80" width="6.4" height="6.50" fill="#3a3c3f"/><path d="M81.9 336.65V340.94999999999993H85.1" stroke="#8d9093" stroke-width="0.9" fill="none"/><rect x="80.2" y="343.50" width="6.4" height="6.50" fill="#3a3c3f"/><path d="M81.9 344.35V348.65H85.1" stroke="#8d9093" stroke-width="0.9" fill="none"/><text x="224.6" y="227.5" font-size="5.9" fill="#eef2f6" text-anchor="end">AREF</text><text x="224.6" y="235.29999999999998" font-size="5.9" fill="#eef2f6" text-anchor="end">GND</text><text x="224.6" y="243.1" font-size="5.9" fill="#eef2f6" text-anchor="end">13</text><text x="224.6" y="250.9" font-size="5.9" fill="#eef2f6" text-anchor="end">12</text><text x="224.6" y="258.70000000000005" font-size="5.9" fill="#eef2f6" text-anchor="end">~11</text><text x="224.6" y="266.5" font-size="5.9" fill="#eef2f6" text-anchor="end">~10</text><text x="224.6" y="274.3" font-size="5.9" fill="#eef2f6" text-anchor="end">~9</text><text x="224.6" y="282.1" font-size="5.9" fill="#eef2f6" text-anchor="end">8</text><text x="224.6" y="294.0" font-size="5.9" fill="#eef2f6" text-anchor="end">7</text><text x="224.6" y="301.8" font-size="5.9" fill="#eef2f6" text-anchor="end">~6</text><text x="224.6" y="309.6" font-size="5.9" fill="#eef2f6" text-anchor="end">~5</text><text x="224.6" y="317.40000000000003" font-size="5.9" fill="#eef2f6" text-anchor="end">4</text><text x="224.6" y="325.3" font-size="5.9" fill="#eef2f6" text-anchor="end">~3</text><text x="224.6" y="333.1" font-size="5.9" fill="#eef2f6" text-anchor="end">2</text><text x="224.6" y="340.90000000000003" font-size="5.9" fill="#eef2f6" text-anchor="end">TX→1</text><text x="224.6" y="348.70000000000005" font-size="5.9" fill="#eef2f6" text-anchor="end">RX←0</text><text x="89.7" y="247.79999999999998" font-size="4.6" font-weight="bold" fill="#e9eef3">IOREF</text><text x="89.7" y="255.7" font-size="4.6" font-weight="bold" fill="#e9eef3">RESET</text><text x="89.7" y="263.3" font-size="4.6" font-weight="bold" fill="#e9eef3">3.3V</text><text x="89.7" y="271.2" font-size="4.6" font-weight="bold" fill="#e9eef3">5V</text><text x="89.7" y="279.0" font-size="4.6" font-weight="bold" fill="#e9eef3">GND</text><text x="89.7" y="286.7" font-size="4.6" font-weight="bold" fill="#e9eef3">GND</text><text x="89.7" y="294.4" font-size="4.6" font-weight="bold" fill="#e9eef3">Vin</text><text x="89.7" y="310.00" font-size="6.3" font-weight="bold" fill="#eef2f6">A0</text><text x="89.7" y="317.70" font-size="6.3" font-weight="bold" fill="#eef2f6">A1</text><text x="89.7" y="325.40" font-size="6.3" font-weight="bold" fill="#eef2f6">A2</text><text x="89.7" y="333.10" font-size="6.3" font-weight="bold" fill="#eef2f6">A3</text><text x="89.7" y="340.80" font-size="6.3" font-weight="bold" fill="#eef2f6">A4</text><text x="89.7" y="348.50" font-size="6.3" font-weight="bold" fill="#eef2f6">A5</text><path d="M108 256.6V294.5M108.3 303.9V348M207.6 238.7V348" stroke="#d3dee8" stroke-width="0.8"/><text transform="translate(101.6,284) rotate(90)" font-size="6.2" font-weight="bold" fill="#eef2f6" text-anchor="middle">POWER</text><text transform="translate(102.3,331.7) rotate(90)" font-size="5.6" font-weight="bold" fill="#eef2f6" text-anchor="middle">ANALOG IN</text><text transform="translate(209.5,306.8) rotate(90)" font-size="5.9" font-weight="bold" fill="#eef2f6" text-anchor="middle">DIGITAL (PWM~)</text><text transform="translate(179,268) rotate(90)" font-size="7" font-weight="bold" fill="#eef2f6" text-anchor="middle">ARDUINO</text><path d="M190.8 264.5A7.4 7.4 0 1 1 199.2 264.5L190.8 270.3A7.4 7.4 0 1 0 199.2 270.3Z" fill="none" stroke="#f4f6f8" stroke-width="2.9" stroke-linejoin="round"/><path d="M195 255.6V261M192.3 276.3H197.7M195 273.6V279" stroke="#f4f6f8" stroke-width="1.5"/><rect x="186.6" y="291.2" width="16.4" height="36" rx="8.2" fill="none" stroke="#e9eef3" stroke-width="0.9"/><text transform="translate(188.6,309.5) rotate(90) scale(1,1.45)" font-size="11.2" fill="none" stroke="#fff" stroke-width="0.55" text-anchor="middle">UNO</text><rect x="173" y="91" width="25" height="36.3" fill="#cfcfcf"/><rect x="173" y="91" width="12" height="36.3" fill="#c8c8c8"/><path d="M185.3 91V127.3" stroke="#bdbdbd" stroke-width="0.5"/><rect x="166" y="80" width="39" height="10.8" rx="1" fill="#343638"/><rect x="166" y="80" width="39" height="2" fill="#444"/><path d="M310.1 229H340.8" stroke="#8a8a8a" stroke-width="0.9"/><circle cx="310.1" cy="229" r="1.2" fill="#8a8a8a"/><circle cx="340.8" cy="229" r="1.2" fill="#8a8a8a"/><path d="M314.4 229Q316.4 225.4 319.4 226.0H332.5Q335.5 225.4 337.5 229Q335.5 232.6 332.5 232.0H319.4Q316.4 232.6 314.4 229Z" fill="#dab27a"/><rect x="317.90000000000003" y="225.70000000000002" width="1.8" height="6.6000000000000005" fill="#e8191d"/><rect x="322.0" y="225.70000000000002" width="1.8" height="6.6000000000000005" fill="#e8191d"/><rect x="326.0" y="225.70000000000002" width="1.8" height="6.6000000000000005" fill="#8a4a12"/><rect x="332.0" y="225.70000000000002" width="1.4" height="6.6000000000000005" fill="#c9a84a"/><path d="M418.7 307.4H450.1" stroke="#8a8a8a" stroke-width="0.9"/><circle cx="418.7" cy="307.4" r="1.2" fill="#8a8a8a"/><circle cx="450.1" cy="307.4" r="1.2" fill="#8a8a8a"/><path d="M423.2 307.4Q425.2 303.79999999999995 428.2 304.4H440.7Q443.7 303.79999999999995 445.7 307.4Q443.7 311.0 440.7 310.4H428.2Q425.2 311.0 423.2 307.4Z" fill="#dab27a"/><rect x="426.7" y="304.09999999999997" width="1.6" height="6.6000000000000005" fill="#8a4a12"/><rect x="430.9" y="304.09999999999997" width="1.6" height="6.6000000000000005" fill="#111"/><rect x="434.7" y="304.09999999999997" width="1.6" height="6.6000000000000005" fill="#f39211"/><rect x="440.3" y="304.09999999999997" width="1.4" height="6.6000000000000005" fill="#c9a84a"/><path d="M364.4 229H371M364.4 236.8L371 234" stroke="#8a8a8a" stroke-width="1.1" stroke-linecap="round"/><circle cx="364.4" cy="229" r="1.1" fill="#8a8a8a"/><circle cx="364.4" cy="236.8" r="1.1" fill="#8a8a8a"/><path d="M371 226.9H382.3Q386.8 226.9 386.8 231.4V233.4Q386.8 237.9 382.3 237.9H371Q369.4 237.9 369.4 236.3V228.5Q369.4 226.9 371 226.9Z" fill="#85201f"/><path d="M370.6 227.4V237.4" stroke="#9a3434" stroke-width="1"/><path d="M364.4 307.4H368M364.4 322.9H368M388 307.4H384M388 322.9H384" stroke="#8a8a8a" stroke-width="1.1"/><path d="M364.4 307.4m-1.3 0a1.3 1.3 0 1 0 2.6 0a1.3 1.3 0 1 0 -2.6 0M364.4 322.9m-1.3 0a1.3 1.3 0 1 0 2.6 0a1.3 1.3 0 1 0 -2.6 0M388 307.4m-1.3 0a1.3 1.3 0 1 0 2.6 0a1.3 1.3 0 1 0 -2.6 0M388 322.9m-1.3 0a1.3 1.3 0 1 0 2.6 0a1.3 1.3 0 1 0 -2.6 0" fill="#8a8a8a"/><rect x="367" y="305.5" width="18.7" height="18.7" rx="0.8" fill="#c8c8c8"/><rect x="368.5" y="307" width="15.7" height="15.7" fill="#cfcfcf"/><circle cx="376.4" cy="314.8" r="5.3" fill="#2f3133"/><circle cx="369.8" cy="308.3" r="2.1" fill="#3f3f3f" stroke="#8f8f8f" stroke-width="0.5"/><circle cx="382.9" cy="308.3" r="2.1" fill="#3f3f3f" stroke="#8f8f8f" stroke-width="0.5"/><circle cx="369.8" cy="321.3" r="2.1" fill="#3f3f3f" stroke="#8f8f8f" stroke-width="0.5"/><circle cx="382.9" cy="321.3" r="2.1" fill="#3f3f3f" stroke="#8f8f8f" stroke-width="0.5"/><path d="M418 322.8H443.4" stroke="#e6060f" stroke-width="1.6" stroke-linecap="round"/><path d="M84.4 276.6H58.8Q52.8 276.6 52.8 270.6V123.8Q52.8 117.6 58.8 117.6L303 116.1Q310.1 116.1 310.1 123.2V135.5" stroke="#141414" stroke-width="1.7" fill="none"/><path d="M84.4 268.9H66.6Q60.8 268.9 60.8 263V110.4Q60.8 104.4 66.8 104.4H296Q302.6 104.4 302.6 111V135.6" stroke="#e6060f" stroke-width="1.7" fill="none"/><path d="M302.3 361.2V383Q302.3 390 309.3 390H435.7Q442.7 390 442.7 383V361.2" stroke="#e6060f" stroke-width="1.7" fill="none"/><path d="M310.1 361.2V395.6Q310.1 403.6 318 403.6H442.3Q450.3 403.6 450.3 395.6V361.2" stroke="#141414" stroke-width="1.7" fill="none"/><path d="M234 241L333.5 236.8" stroke="#35b040" stroke-width="1.6" fill="none"/><path d="M232 331.3H262.5Q270 331.3 270 323.8V314.5Q270 307 277.5 307H333.4" stroke="#ec7604" stroke-width="1.7" fill="none"/></svg></div><div id="panel" class="a"><div class="a" style="left:-1px;top:0;width:317px;height:24px"><div class="btn" style="left:4px;top:3.5px;width:123.5px;height:17px;background:#f2f3f5"></div><div class="a" style="left:9.4px;top:7.5px;font-size:7.8px;color:#222">Text</div><svg class="a" style="left:114px;top:10.5px" width="6" height="4"><path d="M0.5 0.5H5L2.75 3Z" fill="#222"/></svg><div class="a" style="left:131px;top:0;width:1px;height:24px;background:#e3e5e8"></div><div class="btn" style="left:140px;top:3.5px;width:19px;height:17px"></div><div class="btn" style="left:164.5px;top:3.5px;width:19px;height:17px"></div><div class="btn" style="left:188px;top:3.5px;width:19px;height:17px"></div><svg class="a" style="left:140px;top:3.5px" width="70" height="17"><path d="M9.5 4V10.5" stroke="#1d2d3e" stroke-width="1.2"/><path d="M6.5 8L9.5 11.5L12.5 8Z" fill="#1d2d3e"/><path d="M5.5 13H13.5" stroke="#1d2d3e" stroke-width="1.1"/><path d="M28.5 6.5Q28.5 4.8 30.3 4.8H35.7Q37.5 4.8 37.5 6.5V8H28.5Z" fill="#34495e"/><rect x="28.5" y="8.5" width="9" height="4.7" rx="0.7" fill="#34495e"/><path d="M31.5 10.5H34.5" stroke="#f2f3f5" stroke-width="0.8"/><ellipse cx="57.5" cy="10" rx="3" ry="3.6" fill="#1d2d3e"/><circle cx="57.5" cy="5.8" r="1.6" fill="#1d2d3e"/><path d="M53.5 8L55 8.8M53.3 10.5H54.7M53.5 13L55 12.2M61.5 8L60 8.8M61.7 10.5H60.3M61.5 13L60 12.2M56 4.2L55.3 3.2M59 4.2L59.7 3.2" stroke="#1d2d3e" stroke-width="0.6"/></svg><div class="a" style="left:212px;top:0;width:1px;height:24px;background:#e3e5e8"></div><div class="btn" style="left:216.8px;top:3.5px;width:96.5px;height:17px"></div><div class="a" style="left:222px;top:7.5px;font-size:7.6px;color:#222">1 (Arduino Uno R3)</div><svg class="a" style="left:300px;top:10.5px" width="6" height="4"><path d="M0.5 0.5H5L2.75 3Z" fill="#222"/></svg></div></div><div id="code" class="a"></div><div id="gut" class="a"></div><div class="ln" style="top:108.50px">1</div><div class="cl" style="top:108.50px"><span class="k">int</span> buttonState = <span class="n">0</span>;</div><div class="ln" style="top:116.86px">2</div><div class="cl" style="top:116.86px"></div><div class="ln" style="top:125.23px">3</div><div class="cl" style="top:125.23px"><span class="k">void</span> setup()</div><div class="ln" style="top:133.59px">4</div><div class="cl" style="top:133.59px">{</div><div class="ln" style="top:141.96px">5</div><div class="cl" style="top:141.96px">  pinMode(<span class="n">13</span>, OUTPUT);</div><div class="ln" style="top:150.32px">6</div><div class="cl" style="top:150.32px">  pinMode(<span class="n">2</span>, INPUT);</div><div class="ln" style="top:158.69px">7</div><div class="cl" style="top:158.69px">}</div><div class="ln" style="top:167.06px">8</div><div class="cl" style="top:167.06px"></div><div class="ln" style="top:175.42px">9</div><div class="cl" style="top:175.42px"><span class="k">void</span> loop()</div><div class="ln" style="top:183.78px">10</div><div class="cl" style="top:183.78px">{</div><div class="ln" style="top:192.15px">11</div><div class="cl" style="top:192.15px">  buttonState = digitalRead(<span class="n">2</span>);</div><div class="ln" style="top:200.51px">12</div><div class="cl" style="top:200.51px">  <span class="c">// check if pushbutton is pressed.  if it is, the</span></div><div class="ln" style="top:208.88px">13</div><div class="cl" style="top:208.88px">  <span class="c">// buttonState is HIGH</span></div><div class="ln" style="top:217.25px">14</div><div class="cl" style="top:217.25px">  <span class="k">if</span> (buttonState == HIGH) {</div><div class="ln" style="top:225.61px">15</div><div class="cl" style="top:225.61px">    <span class="c">// turn LED on</span></div><div class="ln" style="top:233.98px">16</div><div class="cl" style="top:233.98px">    digitalWrite(<span class="n">13</span>, HIGH);</div><div class="ln" style="top:242.34px">17</div><div class="cl" style="top:242.34px">  } <span class="k">else</span> {</div><div class="ln" style="top:250.71px">18</div><div class="cl" style="top:250.71px">    <span class="c">// turn LED off</span></div><div class="ln" style="top:259.07px">19</div><div class="cl" style="top:259.07px">    digitalWrite(<span class="n">13</span>, LOW);</div><div class="ln" style="top:267.44px">20</div><div class="cl" style="top:267.44px">  }</div><div class="ln" style="top:275.80px">21</div><div class="cl" style="top:275.80px"></div><div class="ln" style="top:284.16px">22</div><div class="cl" style="top:284.16px">}</div><div id="serial" class="a"><svg class="a" style="left:4.5px;top:3.5px" width="13" height="11"><rect x="0.9" y="0.9" width="10.6" height="8.4" rx="0.6" stroke="#1a1a1a" stroke-width="0.9" fill="#fff"/><rect x="0.9" y="0.9" width="10.6" height="1.6" fill="#1a1a1a"/><path d="M8 2.5V9.3" stroke="#1a1a1a" stroke-width="0.8"/><rect x="8.6" y="3.6" width="2.4" height="2.2" fill="#e6e6e6"/><path d="M8.5 7.5H11" stroke="#1a1a1a" stroke-width="0.6"/></svg><span class="a" style="left:21.5px;top:3.2px;color:#3d4a5a">Serial Monitor</span><svg class="a" style="left:306px;top:6.5px" width="5" height="4"><path d="M0.5 3L2.5 0.5L4.5 3Z" fill="#1d2d3e"/></svg></div></body></html>
